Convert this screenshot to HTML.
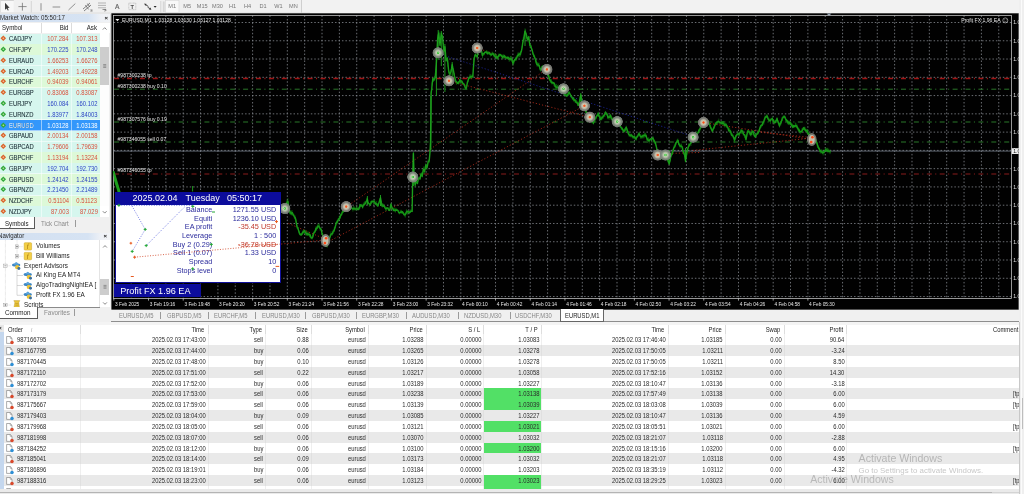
<!DOCTYPE html>
<html lang="en"><head><meta charset="utf-8"><title>MetaTrader 4</title>
<style>
html,body{margin:0;padding:0}
body{-webkit-font-smoothing:antialiased;width:1024px;height:494px;overflow:hidden;background:#f0f0f0;position:relative;font-family:"Liberation Sans",sans-serif;font-size:5.85px;color:#222;line-height:1}
.abs{position:absolute}
.t{position:absolute;white-space:nowrap;line-height:1}
.r{text-align:right}
#mw .row{position:absolute;left:0;width:100px;height:10.8px}
#mw .row span{position:absolute;top:2.6px;font-size:6.5px;white-space:nowrap;transform:scaleX(.9);transform-origin:100% 50%}
#mw .row span.sym{transform-origin:0 50%}
#mw .sym{left:9.4px;color:#22353c;-webkit-text-stroke:.1px #22353c}
#mw .bid{right:31.4px}
#mw .ask{right:2.5px}
.up{color:#2c44c4}.dn{color:#d8503c}
#tbl .row{position:absolute;left:0;width:1024px;height:10.83px}
#tbl .row span{position:absolute;top:3.05px;white-space:nowrap;color:#2a2a2a;font-size:6.5px;transform:scaleX(.9);transform-origin:100% 50%}
#tbl .row span.l{transform-origin:0 50%}
#tbl .hd span{position:absolute;top:2.8px;white-space:nowrap;color:#222;font-size:6.5px;transform:scaleX(.9);transform-origin:100% 50%}
#tbl .hd span.l{transform-origin:0 50%}
.nav span{position:absolute;white-space:nowrap;font-size:6.7px;color:#222;transform:scaleX(.945);transform-origin:0 50%}
.ip{position:absolute;white-space:nowrap;font-size:7.25px;color:#2b2b9c}
</style></head><body><div id="app" style="position:absolute;left:0;top:0;width:1024px;height:494px;will-change:transform;opacity:.999">

<div class="abs" id="toolbar" style="left:0;top:0;width:1024px;height:13.3px;background:#f0f0f0"></div>
<div class="abs" style="left:301px;top:0;width:723px;height:13.3px;background:#f2f2f2"></div>
<div class="abs" style="left:300.5px;top:0;width:.7px;height:13px;background:#cfcfcf"></div>
<svg class="abs" style="left:0;top:0" width="310" height="14" viewBox="0 0 310 14">
<rect x="0.8" y="0.6" width="12.8" height="11.6" fill="#f8f8f8"/><rect x="0" y="0" width="13.8" height=".7" fill="#c4c4c4"/><rect x="0" y="0" width=".7" height="12.4" fill="#dadada"/><rect x="0" y="12.5" width="311" height="1" fill="#dedede"/>
<path d="M5 2.8 L5 9.8 L6.7 8.4 L7.8 10.6 L8.7 10.2 L7.7 8 L9.6 7.8 Z" fill="#3c3c3c"/>
<path d="M22.4 2.8 V10.6 M18.4 6.6 H26.6" stroke="#6e6e6e" stroke-width=".75" fill="none"/>
<path d="M31.3 1 V12.5" stroke="#c8c8c8" stroke-width=".7"/>
<path d="M41 3.2 V10.6" stroke="#777" stroke-width=".8"/>
<path d="M52.6 7 H60.2" stroke="#777" stroke-width=".8"/>
<path d="M68.5 10 L75.3 3.6" stroke="#777" stroke-width=".8"/>
<path d="M83 9 L90 3 M84 11 L91 5 M85.4 5.2 L88.6 9.4 M87.4 3.6 L89.8 7" stroke="#666" stroke-width=".8" fill="none"/>
<path d="M98 3 H106 M98 5.4 H106 M98 7.8 H106" stroke="#999" stroke-width=".7"/>
<path d="M102.5 9.5 H106" stroke="#777" stroke-width=".8"/>
<rect x="128.8" y="3.1" width="7" height="6.6" fill="none" stroke="#9a9a9a" stroke-width=".5" stroke-dasharray=".9 .5"/>
<path d="M145 4.4 L148.4 6.4 M147.6 7.2 L150.6 9" stroke="#3a3a3a" stroke-width=".9" fill="none"/><path d="M144.2 3.6 L146.8 3.9 L145.2 5.8 Z M151.4 9.8 L148.8 9.5 L150.4 7.6 Z" fill="#3a3a3a"/>
<path d="M153.6 6 L156.6 6 L155.1 7.8 Z" fill="#222"/>
<path d="M160.8 1 V12.5" stroke="#c8c8c8" stroke-width=".7"/>
<path d="M163.3 1.5 V12 M164.2 1.5 V12" stroke="#bdbdbd" stroke-width=".5"/>
<rect x="165.6" y="0.3" width="13.4" height="12.4" fill="#f8f8f8" stroke="#cfcfcf" stroke-width=".5"/>
<text x="117.2" y="9.3" font-family="Liberation Sans, sans-serif" font-size="6.6" fill="#606060" text-anchor="middle" stroke="#606060" stroke-width=".15">A</text>
<text x="132.3" y="8.8" font-family="Liberation Sans, sans-serif" font-weight="bold" font-size="5.6" fill="#4a4a4a" text-anchor="middle">T</text>
<text x="90.5" y="12" font-family="Liberation Sans, sans-serif" font-size="3.5" fill="#555">E</text>
<text x="104.5" y="12.4" font-family="Liberation Sans, sans-serif" font-size="3.5" fill="#555">F</text>
</svg>
<div class="t" style="left:162.2px;width:20px;text-align:center;top:4.2px;font-size:5.6px;color:#777">M1</div>
<div class="t" style="left:177.2px;width:20px;text-align:center;top:4.2px;font-size:5.6px;color:#777">M5</div>
<div class="t" style="left:192.2px;width:20px;text-align:center;top:4.2px;font-size:5.6px;color:#777">M15</div>
<div class="t" style="left:207.5px;width:20px;text-align:center;top:4.2px;font-size:5.6px;color:#777">M30</div>
<div class="t" style="left:222.6px;width:20px;text-align:center;top:4.2px;font-size:5.6px;color:#777">H1</div>
<div class="t" style="left:237.6px;width:20px;text-align:center;top:4.2px;font-size:5.6px;color:#777">H4</div>
<div class="t" style="left:253px;width:20px;text-align:center;top:4.2px;font-size:5.6px;color:#777">D1</div>
<div class="t" style="left:268.4px;width:20px;text-align:center;top:4.2px;font-size:5.6px;color:#777">W1</div>
<div class="t" style="left:283.4px;width:20px;text-align:center;top:4.2px;font-size:5.6px;color:#777">MN</div>
<div id="mw" class="abs" style="left:0;top:13.6px;width:110px;height:217px">
<div class="abs" style="left:0;top:.4px;width:110px;height:8.4px;background:linear-gradient(90deg,#d3e0f1 0,#d6e3f3 88px,#eef1f6 101px,#f1f3f6 110px)"></div>
<div class="t" style="left:0.3px;top:1.2px;font-size:6.6px;color:#2a2a2a;transform:scaleX(.93);transform-origin:0 50%">Market Watch: 05:50:17</div>
<div class="t" style="left:104.6px;top:1.4px;font-size:6px;color:#111;font-weight:bold">×</div>
<div class="abs" style="left:0;top:9.2px;width:110px;height:10.6px;background:#fff"></div>
<div class="t" style="left:1.8px;top:11.5px;font-size:6.6px;color:#222;transform:scaleX(.93);transform-origin:0 50%">Symbol</div>
<div class="t r" style="right:41.5px;top:11.5px;font-size:6.6px;color:#222;transform:scaleX(.93);transform-origin:100% 50%">Bid</div>
<div class="t r" style="right:13px;top:11.5px;font-size:6.6px;color:#222;transform:scaleX(.93);transform-origin:100% 50%">Ask</div>
<div class="abs" style="left:41.2px;top:9.6px;width:.6px;height:9.8px;background:#dcdcdc"></div>
<div class="abs" style="left:70.8px;top:9.6px;width:.6px;height:9.8px;background:#dcdcdc"></div>
<div class="row" style="top:20.00px;background:#d6f6ee">
<svg class="abs" style="left:0.2px;top:1.7px" width="7" height="7" viewBox="0 0 7 7"><path d="M3.3 .5 L6.1 3.3 L3.3 6.1 L.5 3.3 Z" fill="#d9632a"/><path d="M3.3 2.3 L4.3 3.3 L3.3 4.3 L2.3 3.3 Z" fill="#fbe6cc" opacity=".7"/></svg>
<span class="sym" style="">CADJPY</span><span class="bid dn" style="">107.284</span><span class="ask dn" style="">107.313</span>
<div class="abs" style="left:0;bottom:0;width:100px;height:.5px;background:rgba(255,255,255,.55)"></div>
<div class="abs" style="left:41.2px;top:0;width:.6px;height:10.8px;background:rgba(255,255,255,.5)"></div>
<div class="abs" style="left:70.8px;top:0;width:.6px;height:10.8px;background:rgba(255,255,255,.5)"></div>
</div>
<div class="row" style="top:30.80px;background:#ddf9d8">
<svg class="abs" style="left:0.2px;top:1.7px" width="7" height="7" viewBox="0 0 7 7"><path d="M3.3 .5 L6.1 3.3 L3.3 6.1 L.5 3.3 Z" fill="#2faa3a"/><path d="M3.3 2.3 L4.3 3.3 L3.3 4.3 L2.3 3.3 Z" fill="#fbe6cc" opacity=".7"/></svg>
<span class="sym" style="">CHFJPY</span><span class="bid up" style="">170.225</span><span class="ask up" style="">170.248</span>
<div class="abs" style="left:0;bottom:0;width:100px;height:.5px;background:rgba(255,255,255,.55)"></div>
<div class="abs" style="left:41.2px;top:0;width:.6px;height:10.8px;background:rgba(255,255,255,.5)"></div>
<div class="abs" style="left:70.8px;top:0;width:.6px;height:10.8px;background:rgba(255,255,255,.5)"></div>
</div>
<div class="row" style="top:41.60px;background:#d6f6ee">
<svg class="abs" style="left:0.2px;top:1.7px" width="7" height="7" viewBox="0 0 7 7"><path d="M3.3 .5 L6.1 3.3 L3.3 6.1 L.5 3.3 Z" fill="#d9632a"/><path d="M3.3 2.3 L4.3 3.3 L3.3 4.3 L2.3 3.3 Z" fill="#fbe6cc" opacity=".7"/></svg>
<span class="sym" style="">EURAUD</span><span class="bid dn" style="">1.66253</span><span class="ask dn" style="">1.66276</span>
<div class="abs" style="left:0;bottom:0;width:100px;height:.5px;background:rgba(255,255,255,.55)"></div>
<div class="abs" style="left:41.2px;top:0;width:.6px;height:10.8px;background:rgba(255,255,255,.5)"></div>
<div class="abs" style="left:70.8px;top:0;width:.6px;height:10.8px;background:rgba(255,255,255,.5)"></div>
</div>
<div class="row" style="top:52.40px;background:#d6f6ee">
<svg class="abs" style="left:0.2px;top:1.7px" width="7" height="7" viewBox="0 0 7 7"><path d="M3.3 .5 L6.1 3.3 L3.3 6.1 L.5 3.3 Z" fill="#d9632a"/><path d="M3.3 2.3 L4.3 3.3 L3.3 4.3 L2.3 3.3 Z" fill="#fbe6cc" opacity=".7"/></svg>
<span class="sym" style="">EURCAD</span><span class="bid dn" style="">1.49203</span><span class="ask dn" style="">1.49228</span>
<div class="abs" style="left:0;bottom:0;width:100px;height:.5px;background:rgba(255,255,255,.55)"></div>
<div class="abs" style="left:41.2px;top:0;width:.6px;height:10.8px;background:rgba(255,255,255,.5)"></div>
<div class="abs" style="left:70.8px;top:0;width:.6px;height:10.8px;background:rgba(255,255,255,.5)"></div>
</div>
<div class="row" style="top:63.20px;background:#ddf9d8">
<svg class="abs" style="left:0.2px;top:1.7px" width="7" height="7" viewBox="0 0 7 7"><path d="M3.3 .5 L6.1 3.3 L3.3 6.1 L.5 3.3 Z" fill="#d9632a"/><path d="M3.3 2.3 L4.3 3.3 L3.3 4.3 L2.3 3.3 Z" fill="#fbe6cc" opacity=".7"/></svg>
<span class="sym" style="">EURCHF</span><span class="bid dn" style="">0.94039</span><span class="ask dn" style="">0.94061</span>
<div class="abs" style="left:0;bottom:0;width:100px;height:.5px;background:rgba(255,255,255,.55)"></div>
<div class="abs" style="left:41.2px;top:0;width:.6px;height:10.8px;background:rgba(255,255,255,.5)"></div>
<div class="abs" style="left:70.8px;top:0;width:.6px;height:10.8px;background:rgba(255,255,255,.5)"></div>
</div>
<div class="row" style="top:74.00px;background:#d6f6ee">
<svg class="abs" style="left:0.2px;top:1.7px" width="7" height="7" viewBox="0 0 7 7"><path d="M3.3 .5 L6.1 3.3 L3.3 6.1 L.5 3.3 Z" fill="#d9632a"/><path d="M3.3 2.3 L4.3 3.3 L3.3 4.3 L2.3 3.3 Z" fill="#fbe6cc" opacity=".7"/></svg>
<span class="sym" style="">EURGBP</span><span class="bid dn" style="">0.83068</span><span class="ask dn" style="">0.83087</span>
<div class="abs" style="left:0;bottom:0;width:100px;height:.5px;background:rgba(255,255,255,.55)"></div>
<div class="abs" style="left:41.2px;top:0;width:.6px;height:10.8px;background:rgba(255,255,255,.5)"></div>
<div class="abs" style="left:70.8px;top:0;width:.6px;height:10.8px;background:rgba(255,255,255,.5)"></div>
</div>
<div class="row" style="top:84.80px;background:#d6f6ee">
<svg class="abs" style="left:0.2px;top:1.7px" width="7" height="7" viewBox="0 0 7 7"><path d="M3.3 .5 L6.1 3.3 L3.3 6.1 L.5 3.3 Z" fill="#2faa3a"/><path d="M3.3 2.3 L4.3 3.3 L3.3 4.3 L2.3 3.3 Z" fill="#fbe6cc" opacity=".7"/></svg>
<span class="sym" style="">EURJPY</span><span class="bid up" style="">160.084</span><span class="ask up" style="">160.102</span>
<div class="abs" style="left:0;bottom:0;width:100px;height:.5px;background:rgba(255,255,255,.55)"></div>
<div class="abs" style="left:41.2px;top:0;width:.6px;height:10.8px;background:rgba(255,255,255,.5)"></div>
<div class="abs" style="left:70.8px;top:0;width:.6px;height:10.8px;background:rgba(255,255,255,.5)"></div>
</div>
<div class="row" style="top:95.60px;background:#d6f6ee">
<svg class="abs" style="left:0.2px;top:1.7px" width="7" height="7" viewBox="0 0 7 7"><path d="M3.3 .5 L6.1 3.3 L3.3 6.1 L.5 3.3 Z" fill="#2faa3a"/><path d="M3.3 2.3 L4.3 3.3 L3.3 4.3 L2.3 3.3 Z" fill="#fbe6cc" opacity=".7"/></svg>
<span class="sym" style="">EURNZD</span><span class="bid up" style="">1.83977</span><span class="ask up" style="">1.84003</span>
<div class="abs" style="left:0;bottom:0;width:100px;height:.5px;background:rgba(255,255,255,.55)"></div>
<div class="abs" style="left:41.2px;top:0;width:.6px;height:10.8px;background:rgba(255,255,255,.5)"></div>
<div class="abs" style="left:70.8px;top:0;width:.6px;height:10.8px;background:rgba(255,255,255,.5)"></div>
</div>
<div class="row" style="top:106.40px;background:#3397fb">
<svg class="abs" style="left:0.2px;top:1.7px" width="7" height="7" viewBox="0 0 7 7"><path d="M3.3 .5 L6.1 3.3 L3.3 6.1 L.5 3.3 Z" fill="#2faa3a"/><path d="M3.3 2.3 L4.3 3.3 L3.3 4.3 L2.3 3.3 Z" fill="#fbe6cc" opacity=".7"/></svg>
<span class="sym" style="color:#fff">EURUSD</span><span class="bid " style="color:#fff">1.03128</span><span class="ask " style="color:#fff">1.03138</span>
<div class="abs" style="left:0;bottom:0;width:100px;height:.5px;background:rgba(255,255,255,.55)"></div>
<div class="abs" style="left:41.2px;top:0;width:.6px;height:10.8px;background:rgba(255,255,255,.5)"></div>
<div class="abs" style="left:70.8px;top:0;width:.6px;height:10.8px;background:rgba(255,255,255,.5)"></div>
</div>
<div class="row" style="top:117.20px;background:#d6f6ee">
<svg class="abs" style="left:0.2px;top:1.7px" width="7" height="7" viewBox="0 0 7 7"><path d="M3.3 .5 L6.1 3.3 L3.3 6.1 L.5 3.3 Z" fill="#d9632a"/><path d="M3.3 2.3 L4.3 3.3 L3.3 4.3 L2.3 3.3 Z" fill="#fbe6cc" opacity=".7"/></svg>
<span class="sym" style="">GBPAUD</span><span class="bid dn" style="">2.00134</span><span class="ask dn" style="">2.00158</span>
<div class="abs" style="left:0;bottom:0;width:100px;height:.5px;background:rgba(255,255,255,.55)"></div>
<div class="abs" style="left:41.2px;top:0;width:.6px;height:10.8px;background:rgba(255,255,255,.5)"></div>
<div class="abs" style="left:70.8px;top:0;width:.6px;height:10.8px;background:rgba(255,255,255,.5)"></div>
</div>
<div class="row" style="top:128.00px;background:#d6f6ee">
<svg class="abs" style="left:0.2px;top:1.7px" width="7" height="7" viewBox="0 0 7 7"><path d="M3.3 .5 L6.1 3.3 L3.3 6.1 L.5 3.3 Z" fill="#d9632a"/><path d="M3.3 2.3 L4.3 3.3 L3.3 4.3 L2.3 3.3 Z" fill="#fbe6cc" opacity=".7"/></svg>
<span class="sym" style="">GBPCAD</span><span class="bid dn" style="">1.79606</span><span class="ask dn" style="">1.79639</span>
<div class="abs" style="left:0;bottom:0;width:100px;height:.5px;background:rgba(255,255,255,.55)"></div>
<div class="abs" style="left:41.2px;top:0;width:.6px;height:10.8px;background:rgba(255,255,255,.5)"></div>
<div class="abs" style="left:70.8px;top:0;width:.6px;height:10.8px;background:rgba(255,255,255,.5)"></div>
</div>
<div class="row" style="top:138.80px;background:#ddf9d8">
<svg class="abs" style="left:0.2px;top:1.7px" width="7" height="7" viewBox="0 0 7 7"><path d="M3.3 .5 L6.1 3.3 L3.3 6.1 L.5 3.3 Z" fill="#d9632a"/><path d="M3.3 2.3 L4.3 3.3 L3.3 4.3 L2.3 3.3 Z" fill="#fbe6cc" opacity=".7"/></svg>
<span class="sym" style="">GBPCHF</span><span class="bid dn" style="">1.13194</span><span class="ask dn" style="">1.13224</span>
<div class="abs" style="left:0;bottom:0;width:100px;height:.5px;background:rgba(255,255,255,.55)"></div>
<div class="abs" style="left:41.2px;top:0;width:.6px;height:10.8px;background:rgba(255,255,255,.5)"></div>
<div class="abs" style="left:70.8px;top:0;width:.6px;height:10.8px;background:rgba(255,255,255,.5)"></div>
</div>
<div class="row" style="top:149.60px;background:#d6f6ee">
<svg class="abs" style="left:0.2px;top:1.7px" width="7" height="7" viewBox="0 0 7 7"><path d="M3.3 .5 L6.1 3.3 L3.3 6.1 L.5 3.3 Z" fill="#2faa3a"/><path d="M3.3 2.3 L4.3 3.3 L3.3 4.3 L2.3 3.3 Z" fill="#fbe6cc" opacity=".7"/></svg>
<span class="sym" style="">GBPJPY</span><span class="bid up" style="">192.704</span><span class="ask up" style="">192.730</span>
<div class="abs" style="left:0;bottom:0;width:100px;height:.5px;background:rgba(255,255,255,.55)"></div>
<div class="abs" style="left:41.2px;top:0;width:.6px;height:10.8px;background:rgba(255,255,255,.5)"></div>
<div class="abs" style="left:70.8px;top:0;width:.6px;height:10.8px;background:rgba(255,255,255,.5)"></div>
</div>
<div class="row" style="top:160.40px;background:#ddf9d8">
<svg class="abs" style="left:0.2px;top:1.7px" width="7" height="7" viewBox="0 0 7 7"><path d="M3.3 .5 L6.1 3.3 L3.3 6.1 L.5 3.3 Z" fill="#2faa3a"/><path d="M3.3 2.3 L4.3 3.3 L3.3 4.3 L2.3 3.3 Z" fill="#fbe6cc" opacity=".7"/></svg>
<span class="sym" style="">GBPUSD</span><span class="bid up" style="">1.24142</span><span class="ask up" style="">1.24155</span>
<div class="abs" style="left:0;bottom:0;width:100px;height:.5px;background:rgba(255,255,255,.55)"></div>
<div class="abs" style="left:41.2px;top:0;width:.6px;height:10.8px;background:rgba(255,255,255,.5)"></div>
<div class="abs" style="left:70.8px;top:0;width:.6px;height:10.8px;background:rgba(255,255,255,.5)"></div>
</div>
<div class="row" style="top:171.20px;background:#d6f6ee">
<svg class="abs" style="left:0.2px;top:1.7px" width="7" height="7" viewBox="0 0 7 7"><path d="M3.3 .5 L6.1 3.3 L3.3 6.1 L.5 3.3 Z" fill="#2faa3a"/><path d="M3.3 2.3 L4.3 3.3 L3.3 4.3 L2.3 3.3 Z" fill="#fbe6cc" opacity=".7"/></svg>
<span class="sym" style="">GBPNZD</span><span class="bid up" style="">2.21450</span><span class="ask up" style="">2.21489</span>
<div class="abs" style="left:0;bottom:0;width:100px;height:.5px;background:rgba(255,255,255,.55)"></div>
<div class="abs" style="left:41.2px;top:0;width:.6px;height:10.8px;background:rgba(255,255,255,.5)"></div>
<div class="abs" style="left:70.8px;top:0;width:.6px;height:10.8px;background:rgba(255,255,255,.5)"></div>
</div>
<div class="row" style="top:182.00px;background:#ddf9d8">
<svg class="abs" style="left:0.2px;top:1.7px" width="7" height="7" viewBox="0 0 7 7"><path d="M3.3 .5 L6.1 3.3 L3.3 6.1 L.5 3.3 Z" fill="#d9632a"/><path d="M3.3 2.3 L4.3 3.3 L3.3 4.3 L2.3 3.3 Z" fill="#fbe6cc" opacity=".7"/></svg>
<span class="sym" style="">NZDCHF</span><span class="bid dn" style="">0.51104</span><span class="ask dn" style="">0.51123</span>
<div class="abs" style="left:0;bottom:0;width:100px;height:.5px;background:rgba(255,255,255,.55)"></div>
<div class="abs" style="left:41.2px;top:0;width:.6px;height:10.8px;background:rgba(255,255,255,.5)"></div>
<div class="abs" style="left:70.8px;top:0;width:.6px;height:10.8px;background:rgba(255,255,255,.5)"></div>
</div>
<div class="row" style="top:192.80px;background:#d6f6ee">
<svg class="abs" style="left:0.2px;top:1.7px" width="7" height="7" viewBox="0 0 7 7"><path d="M3.3 .5 L6.1 3.3 L3.3 6.1 L.5 3.3 Z" fill="#d9632a"/><path d="M3.3 2.3 L4.3 3.3 L3.3 4.3 L2.3 3.3 Z" fill="#fbe6cc" opacity=".7"/></svg>
<span class="sym" style="">NZDJPY</span><span class="bid dn" style="">87.003</span><span class="ask dn" style="">87.029</span>
<div class="abs" style="left:0;bottom:0;width:100px;height:.5px;background:rgba(255,255,255,.55)"></div>
<div class="abs" style="left:41.2px;top:0;width:.6px;height:10.8px;background:rgba(255,255,255,.5)"></div>
<div class="abs" style="left:70.8px;top:0;width:.6px;height:10.8px;background:rgba(255,255,255,.5)"></div>
</div>
<div class="abs" style="left:100px;top:9.2px;width:9.3px;height:194.5px;background:#fff"></div>
<div class="abs" style="left:100px;top:33.7px;width:9.3px;height:37.8px;background:#cdcdcd"></div>
<div class="abs" style="left:100.3px;top:71.5px;width:9px;height:121px;background:#fdfdfd"></div>
<svg class="abs" style="left:100px;top:9.2px" width="10" height="196" viewBox="0 0 10 196">
<path d="M2.8 6.6 L4.7 4.7 L6.6 6.6" stroke="#555" stroke-width=".7" fill="none"/>
<path d="M2.8 188.2 L4.7 190.1 L6.6 188.2" stroke="#555" stroke-width=".7" fill="none"/>
<path d="M3.2 41.6 H6.2 M3.2 43 H6.2 M3.2 44.4 H6.2" stroke="#666" stroke-width=".6"/>
</svg>
<div class="abs" style="left:109.5px;top:0;width:.6px;height:217px;background:#d6d6d6"></div>
<div class="abs" style="left:0;top:203.6px;width:110px;height:13px;background:#f0f0f0"></div>
<div class="abs" style="left:-1px;top:203px;width:35.6px;height:12.1px;background:#fff;border:.9px solid #5a5a5a;border-top:none;box-sizing:border-box"></div>
<div class="t" style="left:4.6px;top:207.1px;font-size:6.6px;color:#222;transform:scaleX(.93);transform-origin:0 50%">Symbols</div>
<div class="t" style="left:40.8px;top:207.1px;font-size:6.6px;color:#8a8a8a;transform:scaleX(.93);transform-origin:0 50%">Tick Chart</div>
<div class="abs" style="left:75px;top:206.6px;width:.6px;height:7px;background:#9a9a9a"></div>
</div>
<div id="nav" class="abs nav" style="left:0;top:232.8px;width:110px;height:88px">
<div class="abs" style="left:0;top:0;width:110px;height:7.4px;background:linear-gradient(90deg,#d3e0f1 0,#d6e3f3 88px,#eef1f6 101px,#f1f3f6 110px)"></div>
<div class="t" style="left:-1.8px;top:0.5px;font-size:6.6px;color:#2a2a2a;transform:scaleX(.93);transform-origin:0 50%">Navigator</div>
<div class="t" style="left:103.6px;top:0.4px;font-size:6px;color:#111;font-weight:bold">×</div>
<div class="abs" style="left:0;top:7.4px;width:109.5px;height:67.3px;background:#fff"></div>
<div class="abs" style="left:99.3px;top:7.4px;width:.5px;height:67.3px;background:#e4e4e4"></div>
<div class="abs" style="left:100.2px;top:46.6px;width:8.8px;height:15.6px;background:#cdcdcd"></div>
<svg class="abs" style="left:99.6px;top:7.4px" width="10" height="68" viewBox="0 0 10 68">
<path d="M3.1 7.5 L5 5.6 L6.9 7.5" stroke="#555" stroke-width=".7" fill="none"/>
<path d="M3.1 59.4 L5 61.3 L6.9 59.4" stroke="#555" stroke-width=".7" fill="none" transform="translate(0,3)"/>
<path d="M3.5 45.4 H6.5 M3.5 46.8 H6.5 M3.5 48.2 H6.5" stroke="#666" stroke-width=".6"/>
</svg>
<svg class="abs" style="left:0;top:0" width="100" height="75" viewBox="0 0 100 75"><path d="M17 7.4 V23.30000000000001 M17 13.599999999999994 H23 M17 23.30000000000001 H23" stroke="#b8b8b8" stroke-width=".5" fill="none" stroke-dasharray=".6 .6"/><path d="M5.4 7.4 V74.6 M5.4 32.80000000000001 H11.5 M5.4 72.0 H11.5" stroke="#b8b8b8" stroke-width=".5" fill="none" stroke-dasharray=".6 .6"/><path d="M17 36.80000000000001 V62.30000000000001 M17 42.5 H23 M17 52.5 H23 M17 62.30000000000001 H23" stroke="#b0b0b0" stroke-width=".5" fill="none"/><rect x="15.3" y="11.899999999999995" width="3.4" height="3.4" fill="#fff" stroke="#9a9a9a" stroke-width=".45"/><path d="M16 13.599999999999994 H18" stroke="#444" stroke-width=".5"/><path d="M17 12.599999999999994 V14.599999999999994" stroke="#444" stroke-width=".5"/><rect x="15.3" y="21.600000000000012" width="3.4" height="3.4" fill="#fff" stroke="#9a9a9a" stroke-width=".45"/><path d="M16 23.30000000000001 H18" stroke="#444" stroke-width=".5"/><path d="M17 22.30000000000001 V24.30000000000001" stroke="#444" stroke-width=".5"/><rect x="3.7" y="31.100000000000012" width="3.4" height="3.4" fill="#fff" stroke="#9a9a9a" stroke-width=".45"/><path d="M4.4 32.80000000000001 H6.4" stroke="#444" stroke-width=".5"/><rect x="3.7" y="70.3" width="3.4" height="3.4" fill="#fff" stroke="#9a9a9a" stroke-width=".45"/><path d="M4.4 72.0 H6.4" stroke="#444" stroke-width=".5"/><path d="M5.4 71.0 V73.0" stroke="#444" stroke-width=".5"/><g transform="translate(24.2,9.699999999999994)"><rect x="0" y="0" width="7.4" height="7.4" rx=".8" fill="#f3cf45" stroke="#caa21e" stroke-width=".5"/><text x="3.7" y="5.8" font-family="Liberation Serif, serif" font-style="italic" font-size="5.6" fill="#8a5a00" text-anchor="middle">f</text></g><g transform="translate(24.2,19.400000000000013)"><rect x="0" y="0" width="7.4" height="7.4" rx=".8" fill="#f3cf45" stroke="#caa21e" stroke-width=".5"/><text x="3.7" y="5.8" font-family="Liberation Serif, serif" font-style="italic" font-size="5.6" fill="#8a5a00" text-anchor="middle">f</text></g><g transform="translate(12.0,28.20000000000001) scale(1.15)"><ellipse cx="3.6" cy="3.2" rx="3.6" ry="1.5" fill="#3a86c4"/><path d="M1.6 3 Q3.6 -1.6 5.8 3 Z" fill="#5aa2da"/><circle cx="4.6" cy="5.2" r="1.9" fill="#e8c23a"/><circle cx="6" cy="6.3" r="1.3" fill="#3d6f9e"/></g><g transform="translate(23.599999999999998,37.9) scale(1.15)"><ellipse cx="3.6" cy="3.2" rx="3.6" ry="1.5" fill="#3a86c4"/><path d="M1.6 3 Q3.6 -1.6 5.8 3 Z" fill="#5aa2da"/><circle cx="4.6" cy="5.2" r="1.9" fill="#e8c23a"/><circle cx="6" cy="6.3" r="1.3" fill="#3d6f9e"/></g><g transform="translate(23.599999999999998,47.9) scale(1.15)"><ellipse cx="3.6" cy="3.2" rx="3.6" ry="1.5" fill="#3a86c4"/><path d="M1.6 3 Q3.6 -1.6 5.8 3 Z" fill="#5aa2da"/><circle cx="4.6" cy="5.2" r="1.9" fill="#e8c23a"/><circle cx="6" cy="6.3" r="1.3" fill="#3d6f9e"/></g><g transform="translate(23.599999999999998,57.70000000000001) scale(1.15)"><ellipse cx="3.6" cy="3.2" rx="3.6" ry="1.5" fill="#3a86c4"/><path d="M1.6 3 Q3.6 -1.6 5.8 3 Z" fill="#5aa2da"/><circle cx="4.6" cy="5.2" r="1.9" fill="#e8c23a"/><circle cx="6" cy="6.3" r="1.3" fill="#3d6f9e"/></g><g transform="translate(12.8,67.6)"><path d="M1 0 H7 L6 2 L6.6 6.6 H1.2 L2 2 Z" fill="#e9c53b" stroke="#b8922a" stroke-width=".4"/><path d="M2.6 3 H5.6 M2.6 4.6 H5.6" stroke="#a07a1a" stroke-width=".4"/></g></svg>
<span style="left:36px;top:10.70px">Volumes</span>
<span style="left:36px;top:20.40px">Bill Williams</span>
<span style="left:24.3px;top:29.90px">Expert Advisors</span>
<span style="left:36px;top:39.60px">Ai King EA MT4</span>
<span style="left:36px;top:49.60px">AlgoTradingNightEA [</span>
<span style="left:36px;top:59.40px">Profit FX 1.96 EA</span>
<span style="left:24.3px;top:69.10px">Scripts</span>
<div class="abs" style="left:0;top:74.7px;width:110px;height:13.5px;background:#f0f0f0"></div>
<div class="abs" style="left:0;top:74.6px;width:99.5px;height:.6px;background:#8a8a8a"></div>
<div class="abs" style="left:-1px;top:74px;width:38.9px;height:12.3px;background:#fff;border:.9px solid #5a5a5a;border-top:none;box-sizing:border-box"></div>
<span style="left:4.8px;top:77.3px;color:#222">Common</span>
<span style="left:43.6px;top:77.3px;color:#8a8a8a">Favorites</span>
<div class="abs" style="left:74.2px;top:76.6px;width:.6px;height:7px;background:#9a9a9a"></div>
</div>
<svg class="abs" id="chart" style="left:0;top:0" width="1024" height="494" viewBox="0 0 1024 494" font-family="Liberation Sans, sans-serif">
<defs><radialGradient id="mr"><stop offset="0" stop-color="#ff4a18"/><stop offset=".15" stop-color="#f06a38"/><stop offset=".27" stop-color="#d4c8ae"/><stop offset=".48" stop-color="#b8b5a4"/><stop offset=".64" stop-color="#8c8c84" stop-opacity=".96"/><stop offset=".9" stop-color="#7c7c76" stop-opacity=".9"/><stop offset="1" stop-color="#707070" stop-opacity="0"/></radialGradient><radialGradient id="mg"><stop offset="0" stop-color="#c8f0c0"/><stop offset=".14" stop-color="#3cc43c"/><stop offset=".27" stop-color="#c0d4b2"/><stop offset=".48" stop-color="#aab49e"/><stop offset=".64" stop-color="#889084" stop-opacity=".96"/><stop offset=".9" stop-color="#788078" stop-opacity=".9"/><stop offset="1" stop-color="#707070" stop-opacity="0"/></radialGradient><clipPath id="plotclip"><rect x="113.6" y="15.5" width="897.9" height="282.9"/></clipPath></defs>
<rect x="111.19999999999999" y="13.1" width="907.9999999999999" height="296.6" fill="#8a8a8a"/>
<rect x="111.6" y="13.5" width="907.1999999999999" height="296.0" fill="#000"/>
<path d="M131.15 15.5 V298.4 M148.50 15.5 V298.4 M165.86 15.5 V298.4 M183.21 15.5 V298.4 M200.56 15.5 V298.4 M217.91 15.5 V298.4 M235.26 15.5 V298.4 M252.62 15.5 V298.4 M269.97 15.5 V298.4 M287.32 15.5 V298.4 M304.67 15.5 V298.4 M322.02 15.5 V298.4 M339.38 15.5 V298.4 M356.73 15.5 V298.4 M374.08 15.5 V298.4 M391.43 15.5 V298.4 M408.78 15.5 V298.4 M426.14 15.5 V298.4 M443.49 15.5 V298.4 M460.84 15.5 V298.4 M478.19 15.5 V298.4 M495.54 15.5 V298.4 M512.90 15.5 V298.4 M530.25 15.5 V298.4 M547.60 15.5 V298.4 M564.95 15.5 V298.4 M582.30 15.5 V298.4 M599.66 15.5 V298.4 M617.01 15.5 V298.4 M634.36 15.5 V298.4 M651.71 15.5 V298.4 M669.06 15.5 V298.4 M686.42 15.5 V298.4 M703.77 15.5 V298.4 M721.12 15.5 V298.4 M738.47 15.5 V298.4 M755.82 15.5 V298.4 M773.18 15.5 V298.4 M790.53 15.5 V298.4 M807.88 15.5 V298.4 M825.23 15.5 V298.4 M842.58 15.5 V298.4 M859.94 15.5 V298.4 M877.29 15.5 V298.4 M894.64 15.5 V298.4 M911.99 15.5 V298.4 M929.34 15.5 V298.4 M946.70 15.5 V298.4 M964.05 15.5 V298.4 M981.40 15.5 V298.4 M998.75 15.5 V298.4 " stroke="#868a90" stroke-width=".8" stroke-dasharray="1.5 1.96" fill="none"/>
<path d="M113.6 22.50 H1011.5 M113.6 40.77 H1011.5 M113.6 59.04 H1011.5 M113.6 77.31 H1011.5 M113.6 95.58 H1011.5 M113.6 113.85 H1011.5 M113.6 132.12 H1011.5 M113.6 150.39 H1011.5 M113.6 168.66 H1011.5 M113.6 186.93 H1011.5 M113.6 205.20 H1011.5 M113.6 223.47 H1011.5 M113.6 241.74 H1011.5 M113.6 260.01 H1011.5 M113.6 278.28 H1011.5 M113.6 296.55 H1011.5 " stroke="#868a90" stroke-width=".8" stroke-dasharray="1.5 1.96" fill="none"/>
<rect x="113.6" y="15.5" width="897.9" height="282.9" fill="none" stroke="#d8d8d8" stroke-width=".7"/>
<path d="M114.1 78.5 H1009.5" stroke="#a01414" stroke-width="1.7" stroke-dasharray="5 3.4 1.1 3.4" fill="none"/>
<path d="M114.1 89.2 H1009.5" stroke="#2a782a" stroke-width="1.0" stroke-dasharray="5 3.4 1.1 3.4" fill="none"/>
<path d="M114.1 122.0 H1009.5" stroke="#2a782a" stroke-width="1.0" stroke-dasharray="5 3.4 1.1 3.4" fill="none"/>
<path d="M114.1 142.0 H1009.5" stroke="#2a782a" stroke-width="1.0" stroke-dasharray="5 3.4 1.1 3.4" fill="none"/>
<path d="M114.1 174.0 H1009.5" stroke="#8a1c1c" stroke-width="1.0" stroke-dasharray="5 3.4 1.1 3.4" fill="none"/>
<path d="M113.6 151.1 H1011.5" stroke="#7e8696" stroke-width=".7" fill="none"/>
<path d="M346 207 L547 69" stroke="#a82a1a" stroke-width=".9" stroke-dasharray="1.2 2" fill="none"/>
<path d="M326 243 L584 106" stroke="#a82a1a" stroke-width=".9" stroke-dasharray="1.2 2" fill="none"/>
<path d="M134.5 257.2 L326 240" stroke="#a82a1a" stroke-width=".9" stroke-dasharray="1.2 2" fill="none"/>
<path d="M439 53.8 L693 136.5" stroke="#1c2494" stroke-width=".9" stroke-dasharray="1.2 2" fill="none"/>
<path d="M449 81 L589.8 117.2" stroke="#a82a1a" stroke-width=".9" stroke-dasharray="1.2 2" fill="none"/>
<path d="M477 48 L512 60" stroke="#a82a1a" stroke-width=".9" stroke-dasharray="1.2 2" fill="none"/>
<path d="M703.5 122.5 L811.8 139.5" stroke="#a82a1a" stroke-width=".9" stroke-dasharray="1.2 2" fill="none"/>
<path d="M693 150.4 L812 138" stroke="#a82a1a" stroke-width=".9" stroke-dasharray="1.2 2" fill="none"/>
<path d="M757.7 132 L811 137.5" stroke="#a82a1a" stroke-width=".9" stroke-dasharray="1.2 2" fill="none"/>
<path d="M288.4 223.4 L322.6 238" stroke="#a82a1a" stroke-width=".9" stroke-dasharray="1.2 2" fill="none"/>
<path d="M666 153.5 L700 152.5" stroke="#a82a1a" stroke-width=".9" stroke-dasharray="1.2 2" fill="none"/>
<path d="M113.6 171.9 L114.3 175.1 L115.0 178.8 L115.8 181.4 L116.5 184.2 L117.2 186.3 L118.0 187.6 L118.7 189.5 L119.3 191.5 L120.0 193.6" stroke="#1c9e1c" stroke-width="1.4" fill="none" stroke-linejoin="round" stroke-linecap="round"/>
<path d="M113.6 170.8V172.3M114.3 174.9V176.4M115.0 176.0V179.7M115.8 179.9V184.7M116.5 182.7V186.2M117.2 184.4V186.2M118.0 185.2V188.3M118.7 188.0V189.9M119.3 190.7V192.0M120.0 192.9V195.7" stroke="#149414" stroke-width=".6" fill="none" opacity=".9"/>
<path d="M280.5 209.0 L281.1 208.8 L281.7 208.1 L282.2 207.9 L282.8 207.1 L283.4 206.2 L284.0 206.7 L284.6 206.8 L285.1 206.3 L285.7 205.6 L286.2 204.2 L286.8 203.1 L287.3 202.3 L287.9 201.3 L288.5 205.3 L289.1 208.3 L289.7 212.1 L290.3 212.0 L290.9 213.2 L291.4 213.7 L292.0 212.7 L292.6 213.1 L293.2 214.9 L293.8 215.4 L294.4 217.0 L295.0 217.1 L295.7 219.3 L296.3 222.8 L297.0 226.5 L297.7 228.0 L298.3 229.6 L299.0 231.8 L299.6 233.7 L300.3 234.6 L301.0 234.3 L301.6 234.7 L302.2 233.2 L302.9 231.9 L303.6 232.1 L304.2 230.6 L304.8 231.7 L305.4 232.4 L305.9 232.6 L306.5 234.0 L307.1 233.6 L307.7 234.4 L308.3 234.0 L308.9 234.5 L309.5 234.5 L310.1 235.1 L310.8 237.0 L311.4 238.1 L312.0 238.1 L312.7 237.1 L313.3 234.5 L314.0 232.7 L314.7 232.1 L315.3 230.7 L316.0 228.3 L316.7 228.7 L317.4 227.2 L318.0 226.2 L318.7 226.2 L319.4 227.1 L320.0 228.2 L320.6 228.9 L321.3 230.0 L322.0 233.0 L322.6 235.1 L323.3 238.0 L324.0 240.1 L324.6 241.5 L325.3 243.8 L326.0 244.8 L326.6 246.1 L327.2 244.7 L327.9 241.8 L328.6 239.3 L329.2 238.4 L329.8 237.8 L330.4 236.0 L331.0 234.4 L331.7 233.9 L332.5 233.4 L333.2 231.2 L333.8 230.7 L334.3 229.8 L334.9 228.1 L335.4 226.3 L336.0 224.1 L336.5 222.2 L337.1 222.2 L337.7 220.7 L338.2 220.3 L338.8 218.9 L339.3 218.7 L339.9 217.7 L340.4 216.3 L341.0 214.8 L341.6 214.6 L342.1 212.9 L342.7 211.8 L343.3 211.4 L343.9 211.3 L344.4 210.4 L345.0 208.8 L345.6 209.3 L346.1 208.1 L346.7 206.9 L347.3 206.5 L347.9 206.5 L348.4 205.6 L349.0 205.1 L349.6 206.0 L350.2 207.0 L350.9 207.1 L351.5 207.8 L352.2 208.6 L352.9 209.1 L353.5 208.7 L354.2 208.4 L354.8 209.0 L355.4 208.9 L356.0 209.0 L356.7 208.2 L357.5 209.3 L358.2 209.3 L358.9 209.0 L359.5 206.7 L360.1 206.1 L360.8 205.0 L361.4 205.9 L362.0 205.9 L362.6 207.3 L363.3 205.3 L364.0 204.6 L364.7 204.1 L365.4 203.3 L366.0 202.0 L366.7 200.6 L367.4 199.4 L368.0 202.0 L368.6 203.5 L369.3 203.9 L370.0 204.7 L370.7 203.9 L371.3 202.1 L372.0 201.3 L372.7 201.8 L373.3 201.6 L374.0 201.6 L374.7 202.1 L375.3 203.2 L376.0 204.3 L376.6 203.8 L377.3 204.6 L377.9 205.9 L378.5 204.2 L379.2 202.0 L379.9 199.4 L380.5 197.6 L381.1 201.5 L381.8 205.2 L382.4 206.0 L383.0 205.3 L383.6 206.2 L384.3 206.3 L385.1 207.8 L385.8 208.9 L386.4 208.1 L387.0 208.4 L387.6 208.0 L388.3 209.0 L389.0 210.4 L389.7 210.3 L390.4 206.8 L391.0 204.2 L391.7 206.9 L392.4 208.4 L393.0 208.7 L393.7 210.5 L394.3 210.5 L394.9 210.1 L395.4 210.5 L396.0 209.7 L396.6 210.4 L397.2 210.1 L397.8 210.5 L398.4 211.6 L399.0 212.6 L399.6 212.9 L400.3 212.3 L401.0 212.3 L401.6 211.9 L402.2 211.8 L402.9 212.7 L403.6 214.0 L404.2 215.0 L404.8 214.6 L405.3 214.6 L405.9 213.2 L406.4 212.0 L407.0 211.7 L407.6 211.6 L408.2 211.6 L408.9 212.1 L409.5 212.8 L410.1 212.2 L410.8 211.2 L411.5 211.4 L412.1 211.4 L412.6 183.1 L413.4 153.2 L414.2 180.2 L415.2 185.1 L416.0 180.2 L416.7 182.2 L417.4 183.6 L418.0 180.5 L418.6 178.4 L419.3 178.3 L420.0 179.0 L421.0 173.9 L421.6 174.3 L422.2 176.4 L422.8 172.7 L423.4 169.1 L424.0 169.7 L424.6 171.5 L425.2 168.1 L425.8 165.0 L426.4 166.3 L427.0 167.7 L427.6 165.0 L428.2 161.5 L429.2 161.0 L430.0 152.0 L430.5 142.4 L430.9 118.8 L431.1 93.3 L431.7 89.2 L432.2 83.8 L432.8 78.8 L433.4 79.1 L434.0 80.0 L434.6 78.5 L435.2 77.2 L435.8 70.3 L436.4 62.6 L437.0 51.0 L437.6 39.4 L438.2 35.1 L438.8 32.9 L439.4 39.6 L440.0 45.3 L440.6 39.2 L441.3 33.5 L441.9 35.4 L442.5 36.0 L443.1 43.3 L443.7 51.2 L444.3 48.9 L444.9 46.8 L445.5 53.4 L446.1 60.6 L446.8 58.8 L447.4 58.3 L448.0 64.6 L448.6 70.5 L449.2 73.0 L449.8 74.6 L450.4 73.0 L451.0 71.2 L451.6 68.4 L452.2 64.7 L452.8 67.7 L453.3 69.7 L453.9 73.2 L454.5 76.7 L455.2 79.1 L455.8 81.4 L456.4 81.9 L457.1 82.5 L457.7 83.3 L458.3 83.4 L458.9 81.6 L459.4 81.6 L460.0 79.8 L460.6 81.2 L461.3 81.0 L461.9 81.4 L462.5 83.1 L463.1 83.3 L463.7 83.8 L464.3 85.1 L464.9 86.5 L465.4 87.9 L466.0 88.7 L466.7 86.4 L467.3 83.0 L468.0 80.7 L468.6 78.8 L469.2 77.7 L469.8 77.4 L470.4 76.5 L471.0 76.9 L471.6 76.8 L472.2 76.5 L472.8 76.7 L473.4 68.5 L474.0 59.9 L474.6 56.8 L475.3 54.5 L475.9 55.8 L476.6 55.7 L477.2 57.1 L478.2 49.2 L479.0 50.2 L479.8 51.5 L480.6 50.4 L481.3 50.3 L481.9 52.8 L482.5 55.5 L483.1 53.6 L483.8 53.9 L484.4 52.8 L485.0 52.2 L485.6 52.4 L486.2 52.0 L486.8 52.4 L487.4 53.3 L488.0 53.0 L488.6 53.0 L489.2 52.8 L489.8 53.5 L490.4 54.6 L491.0 54.3 L491.6 54.9 L492.2 53.9 L492.9 53.8 L493.5 54.3 L494.1 55.7 L494.7 56.1 L495.3 56.4 L495.9 56.3 L496.5 57.2 L497.1 58.4 L497.7 56.8 L498.4 56.8 L499.0 55.1 L499.6 54.7 L500.2 54.5 L500.8 55.1 L501.4 55.6 L502.0 56.2 L502.6 57.3 L503.2 56.4 L503.8 56.8 L504.4 55.8 L505.0 56.8 L505.6 57.3 L506.2 57.7 L506.8 57.9 L507.4 57.6 L508.0 57.3 L508.6 58.0 L509.2 58.9 L509.8 59.1 L510.4 58.6 L511.1 59.0 L511.7 59.1 L512.3 60.9 L512.9 63.3 L513.5 61.9 L514.1 61.0 L514.7 59.5 L515.3 59.5 L515.9 58.8 L516.6 58.2 L517.2 56.3 L517.8 55.2 L518.4 55.3 L519.0 53.9 L519.6 54.5 L520.2 54.5 L520.8 52.5 L521.4 51.1 L522.0 48.1 L522.6 43.9 L523.2 40.4 L523.8 38.4 L524.4 34.6 L525.0 31.5 L525.6 32.4 L526.2 34.2 L526.9 37.8 L527.5 39.9 L528.1 37.9 L528.7 36.8 L529.3 41.3 L529.9 45.5 L530.5 45.6 L531.1 47.0 L531.7 49.2 L532.3 50.7 L532.9 53.2 L533.5 54.7 L534.1 56.1 L534.7 57.8 L535.4 59.2 L536.0 61.8 L536.6 63.4 L537.2 64.9 L537.8 64.8 L538.4 65.0 L539.0 65.3 L539.6 67.2 L540.2 68.8 L540.8 69.9 L541.6 67.8 L542.4 66.2 L543.2 71.4 L543.8 71.0 L544.5 71.3 L545.1 70.6 L545.7 70.4 L546.3 71.2 L546.9 71.9 L547.7 74.5 L548.5 75.9 L549.1 77.9 L549.6 79.8 L550.2 80.2 L550.8 81.0 L551.4 82.3 L552.0 82.8 L552.6 82.7 L553.3 82.7 L553.9 83.5 L554.5 83.7 L555.2 85.7 L555.8 87.0 L556.4 87.1 L557.0 87.5 L557.6 87.3 L558.2 87.5 L558.8 88.4 L559.4 89.0 L560.0 90.3 L560.6 91.0 L561.2 90.7 L561.8 91.2 L562.4 91.1 L563.0 91.0 L563.6 92.2 L564.2 92.7 L564.8 94.4 L565.4 95.1 L566.1 95.5 L566.7 96.0 L567.3 95.4 L567.9 94.2 L568.4 93.7 L569.0 92.1 L569.6 93.3 L570.3 94.8 L570.9 95.4 L571.5 96.4 L572.2 97.7 L572.8 98.7 L573.4 98.5 L574.0 99.9 L574.6 100.3 L575.2 100.6 L575.8 101.7 L576.4 102.5 L577.0 103.0 L577.6 103.3 L578.2 104.9 L578.8 105.3 L579.5 101.7 L580.1 98.2 L580.8 95.1 L581.4 97.6 L581.9 101.9 L582.5 106.3 L583.1 106.9 L583.8 108.0 L584.4 108.5 L585.0 109.6 L585.6 111.1 L586.1 111.9 L586.7 113.2 L587.3 115.6 L587.9 116.0 L588.4 116.3 L589.0 117.5 L589.7 118.1 L590.3 119.6 L591.0 120.1 L591.6 121.2 L592.2 120.8 L592.8 122.0 L593.4 123.3 L594.0 121.1 L594.6 120.9 L595.2 118.9 L595.8 117.8 L596.4 116.3 L597.0 115.7 L597.7 115.2 L598.3 113.5 L598.9 115.9 L599.5 116.8 L600.1 118.1 L600.7 119.4 L601.3 118.5 L601.9 117.5 L602.4 117.4 L603.0 116.9 L603.6 115.5 L604.2 115.1 L604.9 113.7 L605.5 112.0 L606.1 113.2 L606.8 114.1 L607.4 115.4 L608.0 117.7 L608.6 117.0 L609.2 117.3 L609.8 116.9 L610.4 115.1 L611.0 117.3 L611.6 119.0 L612.2 118.9 L612.8 120.1 L613.4 120.2 L614.0 120.5 L614.6 121.4 L615.2 120.6 L615.8 120.7 L616.4 122.2 L617.1 122.9 L617.7 123.2 L618.3 124.5 L618.9 125.2 L619.5 125.4 L620.1 125.4 L620.7 126.8 L621.3 127.7 L621.9 128.4 L622.5 129.0 L623.2 130.7 L623.8 131.5 L624.4 130.7 L625.0 130.0 L625.6 128.8 L626.2 127.2 L626.8 129.1 L627.4 130.5 L628.0 132.7 L628.6 134.1 L629.2 134.9 L629.9 135.3 L630.5 135.2 L631.1 134.9 L631.7 134.9 L632.3 136.6 L632.9 137.0 L633.4 137.0 L634.0 136.5 L634.6 136.8 L635.3 138.0 L635.9 138.8 L636.5 137.8 L637.1 136.9 L637.7 136.2 L638.3 134.7 L638.9 133.8 L639.5 134.4 L640.1 135.8 L640.8 136.9 L641.4 136.4 L642.0 136.5 L642.6 136.0 L643.2 135.7 L643.8 135.7 L644.4 135.2 L645.0 135.7 L645.6 135.2 L646.2 136.0 L646.8 138.0 L647.4 139.4 L648.0 140.2 L648.6 140.4 L649.2 140.9 L649.8 139.7 L650.4 138.9 L651.0 138.9 L651.6 139.4 L652.3 138.3 L652.9 137.7 L653.5 139.6 L654.1 140.7 L654.7 142.0 L655.3 142.1 L655.9 144.9 L656.5 147.4 L657.1 150.2 L657.7 151.9 L658.3 152.6 L659.0 153.7 L659.6 153.2 L660.2 154.1 L660.8 155.3 L661.4 156.7 L662.0 155.5 L662.6 154.5 L663.2 153.3 L663.8 154.4 L664.4 153.7 L665.0 153.3 L665.6 155.1 L666.2 156.6 L666.9 158.2 L667.5 159.0 L668.1 161.2 L668.6 161.9 L669.2 163.2 L669.8 161.4 L670.4 158.4 L671.0 156.0 L671.6 154.9 L672.2 153.5 L672.9 151.1 L673.5 148.7 L674.1 147.3 L674.8 146.5 L675.4 144.8 L676.0 142.7 L676.6 142.2 L677.3 141.1 L677.9 140.6 L678.5 142.7 L679.0 144.5 L679.6 145.4 L680.2 146.2 L680.8 146.0 L681.4 146.2 L682.0 146.7 L682.8 149.9 L683.6 152.6 L684.5 154.5 L685.5 161.1 L686.1 157.3 L686.7 153.6 L687.3 150.0 L687.9 148.4 L688.5 146.6 L689.1 145.5 L689.7 144.7 L690.3 143.5 L690.9 142.9 L691.5 141.5 L692.1 139.8 L692.8 139.5 L693.4 139.2 L694.0 137.8 L694.6 136.3 L695.2 136.1 L695.8 135.3 L696.4 134.5 L697.0 134.3 L697.6 133.3 L698.2 132.8 L698.8 130.7 L699.4 129.7 L700.0 129.0 L700.6 126.8 L701.2 125.5 L701.8 125.6 L702.4 125.6 L703.0 123.8 L703.7 123.4 L704.3 121.9 L704.9 122.6 L705.6 122.9 L706.2 122.3 L706.8 121.5 L707.4 121.8 L708.0 121.4 L708.6 123.0 L709.1 123.8 L709.7 124.6 L710.3 126.7 L711.0 128.4 L711.6 129.7 L712.3 131.3 L713.0 129.5 L713.8 127.7 L714.5 126.5 L715.2 124.2 L715.8 123.7 L716.4 122.8 L717.0 122.3 L717.6 121.9 L718.2 121.6 L718.8 121.4 L719.4 122.2 L720.0 122.5 L720.6 122.7 L721.2 122.9 L721.9 123.3 L722.5 122.9 L723.1 123.3 L723.7 123.3 L724.3 124.7 L724.9 125.7 L725.4 125.2 L726.0 124.6 L726.6 125.4 L727.3 126.8 L728.0 127.9 L728.6 130.3 L729.2 130.1 L729.8 130.8 L730.4 131.2 L731.0 133.1 L731.6 134.9 L732.2 135.4 L732.8 135.7 L733.4 137.0 L734.0 138.4 L734.6 140.1 L735.2 138.0 L735.8 136.5 L736.4 135.3 L737.0 134.7 L737.7 134.1 L738.3 134.4 L738.9 134.3 L739.6 133.3 L740.2 132.6 L740.8 131.8 L741.4 130.7 L742.0 130.9 L742.6 131.5 L743.1 132.7 L743.7 134.2 L744.3 134.8 L744.9 135.5 L745.4 137.6 L746.0 139.3 L746.7 135.8 L747.3 132.9 L748.0 130.8 L748.6 131.5 L749.2 132.0 L749.8 132.5 L750.4 134.9 L751.0 134.4 L751.6 133.0 L752.2 132.0 L752.8 131.1 L753.4 132.2 L754.0 134.7 L754.7 136.2 L755.3 136.9 L755.9 135.2 L756.5 134.6 L757.1 133.8 L757.7 133.6 L758.3 132.7 L758.9 131.5 L759.4 129.4 L760.0 127.8 L760.6 126.6 L761.2 125.3 L761.9 125.1 L762.5 123.8 L763.1 122.5 L763.8 121.7 L764.4 119.3 L765.0 117.8 L765.6 116.8 L766.2 117.2 L766.8 115.9 L767.4 116.5 L768.0 118.3 L768.6 119.8 L769.2 119.9 L769.8 120.8 L770.4 120.8 L771.0 119.4 L771.7 119.0 L772.3 118.5 L772.9 120.4 L773.5 121.2 L774.1 122.5 L774.7 122.7 L775.3 122.2 L775.9 120.8 L776.4 120.6 L777.0 118.5 L777.6 121.0 L778.2 122.1 L778.9 124.1 L779.5 126.0 L780.1 123.9 L780.8 123.3 L781.4 121.3 L782.0 119.6 L782.6 118.1 L783.2 117.3 L783.8 116.7 L784.4 116.5 L785.0 117.4 L785.6 119.1 L786.2 119.5 L786.8 120.8 L787.4 121.1 L788.0 122.3 L788.6 122.7 L789.2 123.2 L789.9 122.6 L790.5 123.2 L791.1 124.7 L791.7 125.1 L792.3 126.3 L792.9 127.2 L793.5 125.7 L794.1 126.5 L794.7 126.2 L795.3 125.5 L795.9 126.0 L796.5 125.7 L797.1 126.9 L797.8 128.4 L798.4 129.3 L799.0 130.5 L799.6 130.8 L800.2 131.6 L800.8 131.5 L801.4 131.4 L802.0 131.0 L802.6 129.4 L803.2 129.2 L803.8 127.8 L804.4 128.9 L805.0 129.2 L805.6 130.7 L806.2 130.6 L806.8 131.0 L807.5 131.6 L808.1 133.4 L808.7 134.8 L809.3 134.4 L809.9 134.8 L810.5 135.9 L811.1 136.8 L811.7 136.8 L812.3 137.5 L812.9 137.5 L813.6 137.5 L814.2 138.1 L814.8 138.3 L815.4 140.2 L816.0 140.6 L816.6 142.2 L817.2 144.0 L817.8 145.9 L818.4 147.7 L819.0 148.6 L819.6 149.7 L820.2 151.1 L820.8 151.8 L821.4 151.8 L822.0 152.2 L822.6 152.7 L823.2 152.6 L823.8 152.1 L824.5 151.7 L825.1 150.2 L825.7 149.8 L826.3 150.1 L826.9 150.9 L827.4 150.6 L828.0 151.0 L828.7 151.0 L829.3 151.5 L830.0 151.7" stroke="#1c9e1c" stroke-width="1.4" fill="none" stroke-linejoin="round" stroke-linecap="round"/>
<path d="M280.5 206.7V210.1M281.1 207.6V211.6M281.7 206.3V209.4M282.2 205.7V208.7M282.8 206.2V210.0M283.4 205.1V208.1M284.0 204.0V208.2M284.6 204.7V209.3M285.1 204.5V206.4M285.7 204.7V206.8M286.2 202.0V205.7M286.8 200.5V205.1M287.3 200.2V203.0M287.9 198.2V202.9M288.5 203.2V207.7M289.1 206.8V210.0M289.7 211.8V214.0M290.3 210.3V215.0M290.9 210.7V214.1M291.4 211.2V215.4M292.0 210.0V214.4M292.6 212.1V215.4M293.2 214.0V215.9M293.8 213.8V215.2M294.4 217.0V218.9M295.0 215.2V219.7M295.7 218.5V220.8M296.3 220.7V224.5M297.0 225.4V228.7M297.7 226.8V228.1M298.3 227.4V230.3M299.0 230.7V233.3M299.6 232.8V234.6M300.3 233.7V235.9M301.0 233.4V235.8M301.6 234.3V235.7M302.2 233.3V235.0M302.9 230.2V233.5M303.6 231.0V233.7M304.2 229.3V233.0M304.8 229.7V233.6M305.4 230.7V235.5M305.9 230.3V234.6M306.5 232.8V235.5M307.1 231.4V235.9M307.7 232.7V235.8M308.3 231.5V235.9M308.9 234.2V235.6M309.5 232.7V237.2M310.1 233.9V237.3M310.8 236.1V238.4M311.4 236.6V238.1M312.0 236.7V239.5M312.7 234.8V237.5M313.3 232.7V236.4M314.0 231.3V233.4M314.7 230.2V232.8M315.3 230.8V232.2M316.0 226.3V230.9M316.7 226.4V230.7M317.4 224.6V228.7M318.0 224.3V228.2M318.7 223.2V227.6M319.4 224.3V228.4M320.0 227.5V230.6M320.6 227.8V229.0M321.3 228.5V230.8M322.0 233.1V234.5M322.6 232.9V237.0M323.3 236.9V239.4M324.0 238.5V239.9M324.6 238.9V243.4M325.3 243.2V246.2M326.0 242.4V247.1M326.6 244.7V246.7M327.2 243.2V247.7M327.9 241.5V243.4M328.6 238.0V240.4M329.2 238.2V240.0M329.8 234.8V239.6M330.4 233.6V237.1M331.0 231.3V235.7M331.7 233.5V235.1M332.5 233.0V235.4M333.2 229.5V233.8M333.8 230.3V232.0M334.3 227.4V231.9M334.9 226.8V228.3M335.4 225.6V227.9M336.0 222.5V224.4M336.5 221.5V223.5M337.1 219.9V224.0M337.7 219.7V223.3M338.2 218.1V221.4M338.8 218.6V220.9M339.3 216.4V220.0M339.9 215.2V218.7M340.4 213.8V218.5M341.0 213.3V216.4M341.6 214.1V215.5M342.1 211.3V213.5M342.7 208.9V213.0M343.3 210.8V213.0M343.9 209.8V211.9M344.4 208.2V211.3M345.0 207.6V212.0M345.6 208.5V209.9M346.1 205.9V209.8M346.7 204.6V209.2M347.3 205.7V207.5M347.9 204.4V207.9M348.4 204.3V207.9M349.0 203.6V206.6M349.6 204.2V208.4M350.2 206.4V209.5M350.9 206.7V208.6M351.5 207.1V208.9M352.2 207.4V209.5M352.9 207.7V211.6M353.5 206.1V210.2M354.2 206.4V209.3M354.8 207.4V210.6M355.4 208.4V209.7M356.0 207.2V211.0M356.7 205.4V209.8M357.5 207.5V209.2M358.2 207.7V210.7M358.9 207.1V209.9M359.5 203.8V207.9M360.1 204.0V208.5M360.8 204.0V207.2M361.4 204.2V206.2M362.0 203.8V206.2M362.6 206.4V208.8M363.3 203.3V206.3M364.0 202.1V205.4M364.7 201.3V205.5M365.4 201.6V203.7M366.0 200.8V204.5M366.7 197.7V201.7M367.4 197.8V200.5M368.0 202.0V203.9M368.6 202.8V204.1M369.3 202.9V206.9M370.0 203.8V205.5M370.7 201.0V204.9M371.3 201.8V203.9M372.0 200.2V202.0M372.7 200.5V202.8M373.3 199.9V201.4M374.0 199.8V204.6M374.7 199.7V203.5M375.3 202.3V204.4M376.0 203.2V205.3M376.6 201.2V205.8M377.3 204.4V206.8M377.9 203.2V206.6M378.5 203.1V205.8M379.2 201.0V202.4M379.9 198.3V202.0M380.5 196.7V200.1M381.1 199.8V202.7M381.8 202.8V207.0M382.4 203.5V207.5M383.0 203.4V205.9M383.6 204.0V207.2M384.3 204.8V206.7M385.1 206.0V208.9M385.8 208.4V211.2M386.4 207.0V210.6M387.0 207.2V209.1M387.6 207.7V209.1M388.3 207.3V209.8M389.0 209.1V210.4M389.7 209.1V211.2M390.4 205.0V209.5M391.0 202.8V205.0M391.7 206.9V208.6M392.4 207.7V210.2M393.0 207.6V211.4M393.7 209.5V210.8M394.3 208.4V211.0M394.9 207.5V211.9M395.4 208.6V212.6M396.0 208.8V210.2M396.6 208.4V210.5M397.2 209.4V211.1M397.8 209.5V210.8M398.4 210.3V213.0M399.0 212.1V213.8M399.6 212.3V214.4M400.3 209.8V213.4M401.0 210.9V212.8M401.6 209.8V213.6M402.2 211.3V213.9M402.9 211.3V213.3M403.6 212.2V214.7M404.2 213.4V214.8M404.8 213.0V216.5M405.3 213.5V217.6M405.9 212.4V214.7M406.4 209.2V213.7M407.0 210.2V213.8M407.6 210.1V214.7M408.2 210.9V212.9M408.9 211.2V212.7M409.5 210.6V213.2M410.1 210.5V213.1M410.8 209.3V212.3M411.5 210.3V212.0M412.1 209.3V212.2M412.6 180.8V184.4M413.4 152.1V153.7M414.2 178.1V180.9M415.2 183.8V187.1M416.0 179.0V182.2M416.7 181.3V182.6M417.4 181.5V184.0M418.0 178.2V180.9M418.6 177.0V180.0M419.3 176.5V179.4M420.0 177.0V179.1M421.0 173.4V175.9M421.6 172.2V175.4M422.2 174.0V177.6M422.8 171.5V174.4M423.4 166.5V171.1M424.0 168.9V172.2M424.6 169.8V173.7M425.2 166.2V169.7M425.8 163.2V165.9M426.4 165.0V169.1M427.0 167.2V169.8M427.6 163.6V164.9M428.2 159.6V162.6M429.2 160.7V163.2M430.0 150.5V152.2M430.5 141.7V143.8M430.9 116.8V118.8M431.1 91.5V94.7M431.7 88.1V90.2M432.2 82.1V85.6M432.8 77.2V80.6M433.4 77.9V82.1M434.0 78.5V80.9M434.6 76.0V80.3M435.2 75.7V79.5M435.8 69.4V73.1M436.4 59.9V64.0M437.0 49.3V52.7M437.6 37.5V40.7M438.2 34.5V36.7M438.8 30.8V33.9M439.4 38.2V40.3M440.0 44.4V46.2M440.6 37.5V39.2M441.3 32.0V33.4M441.9 32.8V36.5M442.5 35.1V38.0M443.1 41.2V44.1M443.7 49.8V54.1M444.3 47.7V49.1M444.9 45.9V48.9M445.5 52.5V55.2M446.1 60.0V62.1M446.8 57.3V59.7M447.4 57.0V61.0M448.0 62.7V66.9M448.6 69.5V72.2M449.2 71.9V75.4M449.8 71.8V75.9M450.4 72.1V74.6M451.0 69.6V71.6M451.6 68.0V69.2M452.2 63.4V67.9M452.8 67.2V68.9M453.3 68.6V71.3M453.9 72.7V75.4M454.5 73.4V78.1M455.2 76.5V80.2M455.8 80.3V81.7M456.4 81.0V84.8M457.1 81.3V82.9M457.7 82.7V84.0M458.3 81.7V84.6M458.9 81.0V83.3M459.4 79.0V83.2M460.0 78.7V81.3M460.6 80.1V84.1M461.3 80.1V82.7M461.9 80.4V83.6M462.5 81.6V83.3M463.1 83.3V84.9M463.7 82.7V84.8M464.3 84.0V85.6M464.9 86.0V87.3M465.4 87.3V89.0M466.0 87.1V89.3M466.7 84.6V87.6M467.3 81.0V83.1M468.0 80.7V82.2M468.6 76.8V79.1M469.2 76.7V78.6M469.8 74.4V79.2M470.4 74.3V78.6M471.0 76.1V78.8M471.6 74.6V77.2M472.2 75.2V78.4M472.8 74.6V78.0M473.4 67.0V71.5M474.0 57.4V62.2M474.6 55.1V59.3M475.3 52.6V54.5M475.9 54.2V56.0M476.6 54.7V56.1M477.2 54.8V58.7M478.2 46.7V49.7M479.0 50.1V52.1M479.8 51.0V52.2M480.6 49.0V53.1M481.3 48.2V52.0M481.9 51.4V55.5M482.5 54.5V58.4M483.1 53.7V55.3M483.8 52.9V55.6M484.4 52.5V54.6M485.0 51.7V53.0M485.6 51.2V53.2M486.2 51.1V53.6M486.8 50.1V54.2M487.4 51.3V54.8M488.0 52.7V54.9M488.6 51.1V53.4M489.2 52.0V54.4M489.8 53.0V54.9M490.4 53.4V56.5M491.0 52.6V54.5M491.6 53.7V55.4M492.2 51.5V54.3M492.9 52.1V55.1M493.5 53.2V55.6M494.1 52.8V57.4M494.7 53.6V57.9M495.3 53.7V57.6M495.9 53.8V58.5M496.5 54.3V59.0M497.1 57.5V60.1M497.7 55.4V57.3M498.4 55.9V59.5M499.0 53.3V55.7M499.6 54.5V56.9M500.2 53.9V55.6M500.8 54.1V56.7M501.4 54.8V56.8M502.0 54.7V59.1M502.6 55.6V59.1M503.2 54.0V57.2M503.8 55.1V59.3M504.4 54.7V57.6M505.0 55.3V58.0M505.6 56.4V58.5M506.2 56.1V59.4M506.8 57.5V58.8M507.4 56.4V59.2M508.0 56.5V59.8M508.6 57.1V58.8M509.2 57.0V61.8M509.8 58.4V60.7M510.4 56.0V60.8M511.1 56.1V60.4M511.7 56.7V61.5M512.3 60.6V62.6M512.9 62.4V65.9M513.5 60.4V64.6M514.1 60.4V63.5M514.7 59.6V61.0M515.3 57.1V60.8M515.9 56.7V60.8M516.6 57.3V60.5M517.2 54.9V56.8M517.8 52.6V56.1M518.4 54.3V57.5M519.0 51.9V54.8M519.6 53.2V57.3M520.2 52.7V56.6M520.8 50.8V55.3M521.4 50.0V51.7M522.0 46.4V47.9M522.6 43.5V45.9M523.2 37.5V41.7M523.8 37.2V39.1M524.4 32.7V36.9M525.0 28.4V32.8M525.6 29.4V34.2M526.2 33.2V36.7M526.9 35.2V39.1M527.5 38.0V41.6M528.1 36.9V38.2M528.7 35.9V38.2M529.3 40.4V42.6M529.9 43.0V46.7M530.5 45.2V46.8M531.1 44.8V47.7M531.7 49.2V50.8M532.3 48.7V52.1M532.9 53.2V55.1M533.5 53.3V57.0M534.1 54.4V56.9M534.7 55.7V58.4M535.4 57.4V60.8M536.0 59.5V63.7M536.6 62.0V64.8M537.2 62.3V66.9M537.8 62.4V66.1M538.4 62.9V66.2M539.0 62.8V67.1M539.6 65.4V69.7M540.2 68.2V71.1M540.8 69.1V71.6M541.6 66.0V69.3M542.4 65.3V66.7M543.2 70.1V72.4M543.8 68.3V72.9M544.5 69.8V73.5M545.1 69.4V71.5M545.7 70.4V72.1M546.3 70.0V72.1M546.9 71.3V73.7M547.7 72.5V76.8M548.5 73.5V76.7M549.1 74.8V79.3M549.6 78.3V80.8M550.2 78.7V82.5M550.8 80.6V83.1M551.4 79.1V83.7M552.0 81.0V84.5M552.6 81.3V83.8M553.3 81.9V84.2M553.9 82.8V86.2M554.5 82.3V87.0M555.2 85.0V87.7M555.8 85.6V89.2M556.4 83.9V88.7M557.0 85.9V88.7M557.6 85.0V88.5M558.2 84.6V89.3M558.8 86.4V88.9M559.4 88.2V90.8M560.0 88.9V90.4M560.6 89.5V93.0M561.2 88.2V92.1M561.8 89.6V93.7M562.4 88.3V92.3M563.0 88.6V91.5M563.6 91.0V95.3M564.2 89.5V94.0M564.8 93.2V95.7M565.4 92.8V95.9M566.1 93.1V97.1M566.7 93.8V96.8M567.3 93.1V96.3M567.9 93.4V94.9M568.4 93.2V95.4M569.0 90.9V92.9M569.6 92.0V93.4M570.3 93.5V96.4M570.9 94.7V97.6M571.5 96.3V97.8M572.2 97.7V99.5M572.8 97.0V100.1M573.4 97.6V101.0M574.0 97.4V102.1M574.6 99.0V100.2M575.2 99.0V103.1M575.8 99.1V102.9M576.4 100.0V103.1M577.0 101.8V103.4M577.6 101.3V105.9M578.2 101.8V106.1M578.8 103.1V105.8M579.5 99.9V102.0M580.1 95.6V100.1M580.8 93.9V96.8M581.4 96.3V100.7M581.9 100.3V103.5M582.5 103.9V108.3M583.1 106.2V108.5M583.8 106.7V108.8M584.4 107.1V109.8M585.0 108.2V110.7M585.6 108.8V111.6M586.1 108.9V113.2M586.7 111.8V114.9M587.3 113.8V116.4M587.9 115.0V116.6M588.4 115.1V117.5M589.0 117.0V119.0M589.7 115.6V118.6M590.3 119.2V121.8M591.0 119.7V120.9M591.6 118.6V123.2M592.2 118.9V122.2M592.8 121.1V123.3M593.4 121.3V124.6M594.0 119.6V122.6M594.6 118.0V121.9M595.2 117.6V119.1M595.8 117.3V119.4M596.4 115.7V118.4M597.0 114.0V116.6M597.7 112.5V116.2M598.3 111.8V116.5M598.9 114.3V116.7M599.5 115.3V119.5M600.1 115.4V118.9M600.7 116.5V120.5M601.3 116.9V120.3M601.9 115.6V120.1M602.4 117.7V118.9M603.0 115.1V119.0M603.6 115.4V116.6M604.2 114.1V116.8M604.9 112.2V116.9M605.5 111.8V113.3M606.1 112.3V115.1M606.8 112.7V115.3M607.4 113.2V116.0M608.0 117.0V119.3M608.6 115.5V117.0M609.2 115.5V119.7M609.8 114.5V117.7M610.4 113.9V115.5M611.0 115.1V119.8M611.6 116.2V120.7M612.2 117.6V120.3M612.8 117.3V121.5M613.4 117.9V122.3M614.0 119.7V121.0M614.6 120.4V123.0M615.2 118.3V122.8M615.8 118.6V122.3M616.4 119.4V123.4M617.1 120.3V124.2M617.7 121.0V124.3M618.3 122.6V125.0M618.9 124.1V126.6M619.5 123.7V126.7M620.1 124.4V127.7M620.7 125.7V128.2M621.3 127.2V130.1M621.9 127.6V129.9M622.5 127.5V129.5M623.2 129.0V132.8M623.8 129.6V131.7M624.4 128.3V132.5M625.0 128.0V131.8M625.6 127.2V130.6M626.2 125.7V130.4M626.8 127.7V130.5M627.4 130.0V132.1M628.0 131.5V133.1M628.6 131.0V135.3M629.2 133.2V136.9M629.9 133.4V136.6M630.5 135.2V137.0M631.1 133.5V137.5M631.7 134.7V136.2M632.3 135.0V137.0M632.9 135.6V138.8M633.4 136.7V138.3M634.0 135.6V138.9M634.6 134.9V139.4M635.3 137.6V140.2M635.9 136.5V140.3M636.5 136.1V140.4M637.1 135.3V137.5M637.7 135.6V136.9M638.3 133.3V135.4M638.9 132.0V134.1M639.5 132.4V135.4M640.1 134.2V136.4M640.8 136.1V139.1M641.4 136.2V138.0M642.0 134.6V138.9M642.6 134.9V138.0M643.2 134.5V137.6M643.8 134.0V138.5M644.4 133.2V135.3M645.0 133.2V137.7M645.6 132.7V136.7M646.2 134.4V137.2M646.8 137.0V140.8M647.4 138.0V141.0M648.0 138.4V140.9M648.6 137.3V141.9M649.2 138.9V143.5M649.8 139.8V141.2M650.4 138.3V139.8M651.0 139.1V140.7M651.6 139.0V141.3M652.3 137.9V139.3M652.9 136.0V137.5M653.5 138.9V142.2M654.1 139.6V143.2M654.7 140.0V144.1M655.3 141.4V142.9M655.9 144.0V145.9M656.5 146.2V148.7M657.1 149.7V151.6M657.7 150.5V153.2M658.3 151.8V153.3M659.0 153.0V156.2M659.6 150.9V154.1M660.2 152.6V154.9M660.8 154.3V158.0M661.4 155.2V159.9M662.0 154.0V158.5M662.6 151.3V155.9M663.2 152.0V154.9M663.8 152.8V156.5M664.4 152.8V156.2M665.0 152.6V154.1M665.6 151.9V156.5M666.2 156.5V158.1M666.9 155.0V159.6M667.5 159.0V160.4M668.1 159.4V163.1M668.6 160.7V164.0M669.2 160.1V164.2M669.8 161.3V162.7M670.4 156.7V161.4M671.0 154.3V157.0M671.6 152.7V155.2M672.2 151.0V155.0M672.9 149.5V152.8M673.5 147.9V150.3M674.1 145.4V148.2M674.8 143.7V148.1M675.4 143.4V145.2M676.0 141.8V144.7M676.6 140.5V142.9M677.3 138.9V142.4M677.9 138.6V141.7M678.5 139.9V144.2M679.0 143.1V145.1M679.6 144.6V147.0M680.2 145.0V148.6M680.8 143.6V146.7M681.4 143.7V147.6M682.0 145.5V147.5M682.8 147.3V152.0M683.6 152.2V154.7M684.5 151.9V156.7M685.5 160.9V162.5M686.1 155.0V159.0M686.7 151.3V155.4M687.3 149.0V151.3M687.9 146.5V150.3M688.5 143.5V147.7M689.1 143.8V146.8M689.7 144.8V146.2M690.3 142.0V143.7M690.9 141.6V146.0M691.5 138.9V143.5M692.1 136.8V141.4M692.8 138.5V142.3M693.4 137.5V139.4M694.0 136.7V140.4M694.6 135.3V139.1M695.2 134.4V137.2M695.8 134.0V135.7M696.4 131.3V135.9M697.0 133.0V134.9M697.6 132.3V133.6M698.2 131.1V132.9M698.8 129.3V132.4M699.4 128.6V131.9M700.0 128.4V131.5M700.6 125.5V127.0M701.2 124.4V125.9M701.8 124.5V128.5M702.4 123.5V126.5M703.0 122.7V125.1M703.7 122.8V125.1M704.3 119.4V124.1M704.9 121.6V125.0M705.6 120.8V123.7M706.2 121.0V125.6M706.8 121.4V122.7M707.4 119.6V122.3M708.0 119.9V121.6M708.6 120.5V124.4M709.1 122.6V123.8M709.7 122.5V126.6M710.3 124.9V128.4M711.0 126.5V128.3M711.6 127.6V129.9M712.3 130.4V132.6M713.0 128.2V130.8M713.8 125.6V129.0M714.5 126.0V128.5M715.2 122.3V125.6M715.8 122.1V125.2M716.4 122.4V124.8M717.0 122.1V124.1M717.6 120.6V124.8M718.2 120.7V122.5M718.8 118.6V123.3M719.4 121.8V123.6M720.0 121.6V123.6M720.6 122.7V124.4M721.2 121.0V123.2M721.9 121.1V124.8M722.5 121.3V124.5M723.1 121.0V125.6M723.7 121.0V123.6M724.3 122.7V125.7M724.9 124.3V127.6M725.4 122.9V125.8M726.0 123.0V126.0M726.6 124.6V128.1M727.3 125.6V127.8M728.0 127.8V129.3M728.6 129.9V132.0M729.2 127.5V131.6M729.8 128.5V133.0M730.4 129.9V132.6M731.0 130.8V135.4M731.6 133.0V136.0M732.2 133.3V137.5M732.8 133.9V136.3M733.4 136.7V138.7M734.0 137.3V141.4M734.6 138.2V142.8M735.2 136.4V140.4M735.8 135.0V139.1M736.4 135.0V136.8M737.0 133.0V135.3M737.7 130.9V135.4M738.3 132.6V135.6M738.9 132.5V136.5M739.6 132.0V136.4M740.2 129.9V133.5M740.8 129.2V132.8M741.4 129.1V133.9M742.0 129.1V131.4M742.6 130.2V133.9M743.1 130.5V135.3M743.7 133.8V135.5M744.3 134.9V136.3M744.9 134.1V138.1M745.4 135.6V139.9M746.0 137.3V141.9M746.7 134.0V137.0M747.3 130.7V133.2M748.0 130.5V132.2M748.6 130.8V132.8M749.2 130.4V134.4M749.8 130.6V133.6M750.4 133.2V135.4M751.0 133.0V136.5M751.6 130.3V134.9M752.2 130.6V135.1M752.8 130.9V133.1M753.4 131.4V134.8M754.0 132.4V136.4M754.7 135.1V137.3M755.3 134.5V137.4M755.9 133.1V137.4M756.5 133.7V136.6M757.1 132.1V134.2M757.7 131.5V134.8M758.3 130.7V133.0M758.9 130.5V131.9M759.4 128.8V131.9M760.0 125.9V129.4M760.6 124.7V127.4M761.2 124.8V127.7M761.9 124.2V125.8M762.5 122.5V126.2M763.1 121.2V124.4M763.8 120.2V124.8M764.4 118.3V120.4M765.0 115.4V120.2M765.6 116.3V118.2M766.2 115.8V117.2M766.8 113.9V117.0M767.4 115.1V118.9M768.0 117.7V120.0M768.6 118.5V122.0M769.2 118.3V121.1M769.8 119.9V121.5M770.4 119.2V123.9M771.0 117.8V119.2M771.7 118.3V120.5M772.3 116.4V119.2M772.9 119.2V121.9M773.5 119.0V122.9M774.1 121.1V124.6M774.7 120.0V123.5M775.3 119.6V123.3M775.9 120.1V121.5M776.4 119.1V120.4M777.0 117.2V119.8M777.6 121.2V122.7M778.2 120.0V124.2M778.9 122.1V125.4M779.5 122.9V127.6M780.1 122.2V124.5M780.8 121.1V125.4M781.4 119.8V122.4M782.0 116.9V121.3M782.6 116.5V120.5M783.2 115.6V118.4M783.8 115.3V118.0M784.4 115.6V117.9M785.0 115.7V118.4M785.6 117.0V121.0M786.2 118.8V121.7M786.8 119.1V122.0M787.4 119.9V124.3M788.0 120.1V124.1M788.6 121.4V125.0M789.2 122.5V124.8M789.9 120.6V125.2M790.5 121.3V124.9M791.1 122.4V126.0M791.7 123.2V127.2M792.3 123.6V128.3M792.9 124.3V128.1M793.5 124.9V127.6M794.1 125.6V127.8M794.7 125.0V127.0M795.3 122.5V127.3M795.9 122.9V127.3M796.5 124.7V128.0M797.1 124.5V128.8M797.8 127.1V130.4M798.4 127.8V131.8M799.0 128.3V131.6M799.6 129.1V132.8M800.2 131.0V134.2M800.8 131.2V132.9M801.4 130.7V133.1M802.0 128.2V132.8M802.6 127.9V131.1M803.2 127.0V130.0M803.8 126.8V130.3M804.4 126.7V130.3M805.0 127.0V131.1M805.6 130.0V131.8M806.2 129.2V132.1M806.8 128.8V133.6M807.5 129.0V133.6M808.1 130.5V134.5M808.7 134.0V136.3M809.3 133.2V136.9M809.9 133.0V135.6M810.5 134.7V137.2M811.1 135.9V137.2M811.7 134.3V137.9M812.3 137.1V139.4M812.9 134.7V139.3M813.6 135.8V137.7M814.2 138.0V139.5M814.8 135.9V139.8M815.4 139.1V142.1M816.0 140.6V141.9M816.6 139.5V143.8M817.2 142.5V146.3M817.8 145.4V147.9M818.4 146.7V148.7M819.0 147.3V149.6M819.6 147.7V151.9M820.2 150.3V153.7M820.8 150.2V152.2M821.4 149.4V152.8M822.0 149.5V154.2M822.6 151.2V154.0M823.2 151.3V155.5M823.8 149.7V153.3M824.5 150.8V153.3M825.1 150.0V151.9M825.7 147.1V151.4M826.3 148.3V150.8M826.9 148.1V151.9M827.4 147.8V151.5M828.0 148.9V153.2M828.7 148.6V151.9M829.3 150.5V151.9M830.0 149.5V154.2" stroke="#149414" stroke-width=".6" fill="none" opacity=".9"/>
<path d="M113.9 171 L114.6 171.5 L120.6 192 L117.6 192 L113.9 180 Z" fill="#1c9e1c"/>
<path d="M413.4 153.7V186M438.2 30V60M441.3 31V66M444.9 44V92M452.2 62V84M436.4 60V96M525 30.5V46M580.8 93V106M669.2 150V165M685.5 148V162M430.9 96V150M192.6 186V191.5M367.4 196V205M380.5 195V206" stroke="#1fa51f" stroke-width=".9" fill="none"/>
<circle cx="438.1" cy="52.8" r="5.9" fill="url(#mg)"/>
<circle cx="449" cy="80.8" r="5.9" fill="url(#mr)"/>
<circle cx="477.2" cy="48" r="5.9" fill="url(#mr)"/>
<circle cx="546.9" cy="69.4" r="5.9" fill="url(#mr)"/>
<circle cx="563.5" cy="88.8" r="5.9" fill="url(#mg)"/>
<circle cx="584.4" cy="105.8" r="5.9" fill="url(#mr)"/>
<circle cx="589.8" cy="117.2" r="5.9" fill="url(#mr)"/>
<circle cx="617.2" cy="121.6" r="5.9" fill="url(#mg)"/>
<circle cx="657.7" cy="155" r="5.9" fill="url(#mr)"/>
<circle cx="665.5" cy="155" r="5.9" fill="url(#mg)"/>
<circle cx="693.1" cy="137.2" r="5.9" fill="url(#mg)"/>
<circle cx="703.5" cy="122.5" r="5.9" fill="url(#mr)"/>
<ellipse cx="811.8" cy="139.5" rx="4.8" ry="6.4" fill="#84847c" opacity=".9"/><ellipse cx="811.8" cy="139.5" rx="2.9" ry="4.5" fill="#c4bfac"/><circle cx="812.4" cy="137.3" r="1.3" fill="#ff4a18"/><circle cx="811.1999999999999" cy="142.1" r="1.3" fill="#ff4a18"/>
<circle cx="412.8" cy="177" r="5.9" fill="url(#mg)"/>
<circle cx="346.2" cy="206.6" r="5.9" fill="url(#mr)"/>
<ellipse cx="325.5" cy="240.5" rx="4.8" ry="6.4" fill="#84847c" opacity=".9"/><ellipse cx="325.5" cy="240.5" rx="2.9" ry="4.5" fill="#c4bfac"/><circle cx="326.1" cy="238.3" r="1.3" fill="#ff4a18"/><circle cx="324.9" cy="243.1" r="1.3" fill="#ff4a18"/>
<circle cx="284.8" cy="208.5" r="5.9" fill="url(#mg)"/>
<path d="M115.4 19 L119.4 19 L117.4 21.3 Z" fill="#f4f4f4"/>
<text x="122" y="22" font-size="5.0" fill="#e6e6e6" text-anchor="start">EURUSD,M1&#160; 1.03128 1.03130 1.03127 1.03128</text>
<text x="117.5" y="77.4" font-size="5.1" fill="#e6e6e6" text-anchor="start">#987300238 tp</text>
<text x="117.5" y="87.8" font-size="5.1" fill="#e6e6e6" text-anchor="start">#987300238 buy 0.10</text>
<text x="117.5" y="120.8" font-size="5.1" fill="#e6e6e6" text-anchor="start">#987307576 buy 0.19</text>
<text x="117.5" y="140.8" font-size="5.1" fill="#e6e6e6" text-anchor="start">#987346055 sell 0.07</text>
<text x="117.5" y="172.4" font-size="5.1" fill="#e6e6e6" text-anchor="start">#987346055 tp</text>
<text x="1000.6" y="22.2" font-size="5.1" fill="#e6e6e6" text-anchor="end">Profit FX 1.96 EA</text>
<circle cx="1005.3" cy="20.4" r="2.5" fill="none" stroke="#ddd" stroke-width=".6"/><path d="M1004.2 21.2 Q1005.3 22.2 1006.4 21.2" stroke="#ddd" stroke-width=".4" fill="none"/><circle cx="1004.4" cy="19.8" r=".35" fill="#ddd"/><circle cx="1006.2" cy="19.8" r=".35" fill="#ddd"/>
<text x="1013.2" y="24.4" font-size="5.2" fill="#e0e0e0" text-anchor="start">1.0</text>
<text x="1013.2" y="42.669999999999995" font-size="5.2" fill="#e0e0e0" text-anchor="start">1.0</text>
<text x="1013.2" y="60.94" font-size="5.2" fill="#e0e0e0" text-anchor="start">1.0</text>
<text x="1013.2" y="79.21000000000001" font-size="5.2" fill="#e0e0e0" text-anchor="start">1.0</text>
<text x="1013.2" y="97.48" font-size="5.2" fill="#e0e0e0" text-anchor="start">1.0</text>
<text x="1013.2" y="115.75" font-size="5.2" fill="#e0e0e0" text-anchor="start">1.0</text>
<text x="1013.2" y="134.02" font-size="5.2" fill="#e0e0e0" text-anchor="start">1.0</text>
<text x="1013.2" y="152.29" font-size="5.2" fill="#e0e0e0" text-anchor="start">1.0</text>
<text x="1013.2" y="170.56" font-size="5.2" fill="#e0e0e0" text-anchor="start">1.0</text>
<text x="1013.2" y="188.83" font-size="5.2" fill="#e0e0e0" text-anchor="start">1.0</text>
<text x="1013.2" y="207.1" font-size="5.2" fill="#e0e0e0" text-anchor="start">1.0</text>
<text x="1013.2" y="225.37" font-size="5.2" fill="#e0e0e0" text-anchor="start">1.0</text>
<text x="1013.2" y="243.64000000000001" font-size="5.2" fill="#e0e0e0" text-anchor="start">1.0</text>
<text x="1013.2" y="261.90999999999997" font-size="5.2" fill="#e0e0e0" text-anchor="start">1.0</text>
<text x="1013.2" y="280.17999999999995" font-size="5.2" fill="#e0e0e0" text-anchor="start">1.0</text>
<text x="1013.2" y="298.45" font-size="5.2" fill="#e0e0e0" text-anchor="start">1.0</text>
<rect x="1011.8" y="148.2" width="7" height="5.8" fill="#eee"/>
<text x="1013.2" y="152.9" font-size="5.2" fill="#111" text-anchor="start">1.0</text>
<path d="M1011.5 13.4 l-2.4 0 l2.4 2.6 l2.4 -2.6z" fill="#9aa6b4" transform="translate(-182.5,0)"/>
<rect x="1018.8" y="13.0" width="6" height="297.0" fill="#f0f0f0"/><path d="M1021.2 13 V309.5" stroke="#fff" stroke-width=".8"/><path d="M1019.0 13 V309.5" stroke="#8a8a8a" stroke-width=".5"/>
<path d="M113.80 298.4 V300.59999999999997" stroke="#ddd" stroke-width=".7"/>
<text x="115.0" y="305.5" font-size="4.8" fill="#e8e8e8" text-anchor="start">3 Feb 2025</text>
<path d="M148.50 298.4 V300.59999999999997" stroke="#ddd" stroke-width=".7"/>
<text x="149.7" y="305.5" font-size="4.8" fill="#e8e8e8" text-anchor="start">3 Feb 19:16</text>
<path d="M183.21 298.4 V300.59999999999997" stroke="#ddd" stroke-width=".7"/>
<text x="184.41" y="305.5" font-size="4.8" fill="#e8e8e8" text-anchor="start">3 Feb 19:48</text>
<path d="M217.91 298.4 V300.59999999999997" stroke="#ddd" stroke-width=".7"/>
<text x="219.11" y="305.5" font-size="4.8" fill="#e8e8e8" text-anchor="start">3 Feb 20:20</text>
<path d="M252.62 298.4 V300.59999999999997" stroke="#ddd" stroke-width=".7"/>
<text x="253.82" y="305.5" font-size="4.8" fill="#e8e8e8" text-anchor="start">3 Feb 20:52</text>
<path d="M287.32 298.4 V300.59999999999997" stroke="#ddd" stroke-width=".7"/>
<text x="288.52" y="305.5" font-size="4.8" fill="#e8e8e8" text-anchor="start">3 Feb 21:24</text>
<path d="M322.02 298.4 V300.59999999999997" stroke="#ddd" stroke-width=".7"/>
<text x="323.22" y="305.5" font-size="4.8" fill="#e8e8e8" text-anchor="start">3 Feb 21:56</text>
<path d="M356.73 298.4 V300.59999999999997" stroke="#ddd" stroke-width=".7"/>
<text x="357.93" y="305.5" font-size="4.8" fill="#e8e8e8" text-anchor="start">3 Feb 22:28</text>
<path d="M391.43 298.4 V300.59999999999997" stroke="#ddd" stroke-width=".7"/>
<text x="392.63" y="305.5" font-size="4.8" fill="#e8e8e8" text-anchor="start">3 Feb 23:00</text>
<path d="M426.14 298.4 V300.59999999999997" stroke="#ddd" stroke-width=".7"/>
<text x="427.34" y="305.5" font-size="4.8" fill="#e8e8e8" text-anchor="start">3 Feb 23:32</text>
<path d="M460.84 298.4 V300.59999999999997" stroke="#ddd" stroke-width=".7"/>
<text x="462.04" y="305.5" font-size="4.8" fill="#e8e8e8" text-anchor="start">4 Feb 00:10</text>
<path d="M495.54 298.4 V300.59999999999997" stroke="#ddd" stroke-width=".7"/>
<text x="496.74" y="305.5" font-size="4.8" fill="#e8e8e8" text-anchor="start">4 Feb 00:42</text>
<path d="M530.25 298.4 V300.59999999999997" stroke="#ddd" stroke-width=".7"/>
<text x="531.45" y="305.5" font-size="4.8" fill="#e8e8e8" text-anchor="start">4 Feb 01:14</text>
<path d="M564.95 298.4 V300.59999999999997" stroke="#ddd" stroke-width=".7"/>
<text x="566.15" y="305.5" font-size="4.8" fill="#e8e8e8" text-anchor="start">4 Feb 01:46</text>
<path d="M599.66 298.4 V300.59999999999997" stroke="#ddd" stroke-width=".7"/>
<text x="600.86" y="305.5" font-size="4.8" fill="#e8e8e8" text-anchor="start">4 Feb 02:18</text>
<path d="M634.36 298.4 V300.59999999999997" stroke="#ddd" stroke-width=".7"/>
<text x="635.56" y="305.5" font-size="4.8" fill="#e8e8e8" text-anchor="start">4 Feb 02:50</text>
<path d="M669.06 298.4 V300.59999999999997" stroke="#ddd" stroke-width=".7"/>
<text x="670.26" y="305.5" font-size="4.8" fill="#e8e8e8" text-anchor="start">4 Feb 03:22</text>
<path d="M703.77 298.4 V300.59999999999997" stroke="#ddd" stroke-width=".7"/>
<text x="704.97" y="305.5" font-size="4.8" fill="#e8e8e8" text-anchor="start">4 Feb 03:54</text>
<path d="M738.47 298.4 V300.59999999999997" stroke="#ddd" stroke-width=".7"/>
<text x="739.67" y="305.5" font-size="4.8" fill="#e8e8e8" text-anchor="start">4 Feb 04:26</text>
<path d="M773.18 298.4 V300.59999999999997" stroke="#ddd" stroke-width=".7"/>
<text x="774.38" y="305.5" font-size="4.8" fill="#e8e8e8" text-anchor="start">4 Feb 04:58</text>
<path d="M807.88 298.4 V300.59999999999997" stroke="#ddd" stroke-width=".7"/>
<text x="809.08" y="305.5" font-size="4.8" fill="#e8e8e8" text-anchor="start">4 Feb 05:30</text>
</svg>
<div class="abs" style="left:115px;top:191.6px;width:165.5px;height:91.3px;background:#fff;border:1px solid #10109a;box-sizing:border-box"></div>
<div class="abs" style="left:115px;top:191.6px;width:165.5px;height:13.3px;background:#0c0c9c"></div>
<div class="t" style="left:132.5px;top:193.6px;font-size:9px;color:#fff">2025.02.04</div>
<div class="t" style="left:185.6px;top:193.6px;font-size:9px;color:#fff">Tuesday</div>
<div class="t" style="left:227px;top:193.6px;font-size:9px;color:#fff">05:50:17</div>
<div class="ip r" style="right:811.8px;top:205.90px">Balance</div>
<div class="ip r" style="right:747.8px;top:205.90px;color:#2b2b9c">1271.55 USD</div>
<div class="ip r" style="right:811.8px;top:214.57px">Equiti</div>
<div class="ip r" style="right:747.8px;top:214.57px;color:#2b2b9c">1236.10 USD</div>
<div class="ip r" style="right:811.8px;top:223.24px">EA profit</div>
<div class="ip r" style="right:747.8px;top:223.24px;color:#c0392b">-35.45 USD</div>
<div class="ip r" style="right:811.8px;top:231.91px">Leverage</div>
<div class="ip r" style="right:747.8px;top:231.91px;color:#2b2b9c">1 : 500</div>
<div class="ip r" style="right:811.8px;top:240.58px">Buy 2 (0.29)</div>
<div class="ip r" style="right:747.8px;top:240.58px;color:#c0392b">-36.78 USD</div>
<div class="ip r" style="right:811.8px;top:249.25px">Sell 1 (0.07)</div>
<div class="ip r" style="right:747.8px;top:249.25px;color:#2b2b9c">1.33 USD</div>
<div class="ip r" style="right:811.8px;top:257.92px">Spread</div>
<div class="ip r" style="right:747.8px;top:257.92px;color:#2b2b9c">10</div>
<div class="ip r" style="right:811.8px;top:266.59px">Stops level</div>
<div class="ip r" style="right:747.8px;top:266.59px;color:#2b2b9c">0</div>
<svg class="abs" style="left:0;top:0" width="1024" height="494" viewBox="0 0 1024 494">
<g stroke="#3a46d8" stroke-width=".7" stroke-dasharray="1 1.5" fill="none"><path d="M118.8 205.4 H193"/><path d="M132 206 L145.2 229.4"/><path d="M145.2 229.4 L132.2 251.4"/><path d="M184.5 207 L146.2 245.6"/></g>
<path d="M134.5 257.2 L280 244.1" stroke="#d04020" stroke-width=".8" stroke-dasharray="1 1.6" fill="none"/>
<path d="M238 244.6 H278" stroke="#d04020" stroke-width=".7" stroke-dasharray="2 1.4" fill="none" opacity=".8"/>
<g stroke="#22a834" stroke-width="1" fill="none"><path d="M117.4 205.3 h3 m-1.5 -1.5 v3"/><path d="M143.7 229.4 h3 m-1.5 -1.5 v3"/><path d="M144.7 245.6 h3 m-1.5 -1.5 v3"/><path d="M130.7 251.4 h3 m-1.5 -1.5 v3"/><path d="M191.3 206.4 h3 m-1.5 -1.5 v3"/><path d="M209.8 244.4 h3 m-1.5 -1.5 v3"/><path d="M191.2 268.8 h3 m-1.5 -1.5 v3"/><path d="M212 212 h3"/></g>
<g stroke="#e85a20" stroke-width="1" fill="none"><path d="M129.6 243.2 h2.6 m-1.3 -1.3 v2.6"/><path d="M133.1 257.2 h3 m-1.5 -1.5 v3"/><path d="M130.8 276.5 h3"/><path d="M275 221.6 h3 m-1.5 -1.5 v3"/><path d="M275.6 266.4 h3.6"/></g>
</svg>
<div class="abs" style="left:113.8px;top:283.6px;width:87px;height:13.4px;background:#0c0c9c"></div>
<div class="t" style="left:120.2px;top:286.5px;font-size:9.1px;color:#fff">Profit FX 1.96 EA</div>
<div class="abs" style="left:111px;top:309.6px;width:913px;height:12.6px;background:#f0f0f0"></div>
<div class="abs" style="left:111px;top:321.4px;width:913px;height:1px;background:#8e8e8e"></div>
<div class="t" style="left:119.4px;top:312.9px;font-size:6.5px;color:#868686;transform:scaleX(.9);transform-origin:0 50%">EURUSD,M5</div>
<div class="abs" style="left:160.2px;top:312px;width:.6px;height:7px;background:#9a9a9a"></div>
<div class="t" style="left:167.2px;top:312.9px;font-size:6.5px;color:#868686;transform:scaleX(.9);transform-origin:0 50%">GBPUSD,M5</div>
<div class="abs" style="left:207.8px;top:312px;width:.6px;height:7px;background:#9a9a9a"></div>
<div class="t" style="left:214px;top:312.9px;font-size:6.5px;color:#868686;transform:scaleX(.9);transform-origin:0 50%">EURCHF,M5</div>
<div class="abs" style="left:255.3px;top:312px;width:.6px;height:7px;background:#9a9a9a"></div>
<div class="t" style="left:261.6px;top:312.9px;font-size:6.5px;color:#868686;transform:scaleX(.9);transform-origin:0 50%">EURUSD,M30</div>
<div class="abs" style="left:304.7px;top:312px;width:.6px;height:7px;background:#9a9a9a"></div>
<div class="t" style="left:311.6px;top:312.9px;font-size:6.5px;color:#868686;transform:scaleX(.9);transform-origin:0 50%">GBPUSD,M30</div>
<div class="abs" style="left:355.6px;top:312px;width:.6px;height:7px;background:#9a9a9a"></div>
<div class="t" style="left:361.6px;top:312.9px;font-size:6.5px;color:#868686;transform:scaleX(.9);transform-origin:0 50%">EURGBP,M30</div>
<div class="abs" style="left:406.2px;top:312px;width:.6px;height:7px;background:#9a9a9a"></div>
<div class="t" style="left:411.9px;top:312.9px;font-size:6.5px;color:#868686;transform:scaleX(.9);transform-origin:0 50%">AUDUSD,M30</div>
<div class="abs" style="left:458.4px;top:312px;width:.6px;height:7px;background:#9a9a9a"></div>
<div class="t" style="left:463.6px;top:312.9px;font-size:6.5px;color:#868686;transform:scaleX(.9);transform-origin:0 50%">NZDUSD,M30</div>
<div class="abs" style="left:509.5px;top:312px;width:.6px;height:7px;background:#9a9a9a"></div>
<div class="t" style="left:515px;top:312.9px;font-size:6.5px;color:#868686;transform:scaleX(.9);transform-origin:0 50%">USDCHF,M30</div>
<div class="abs" style="left:559.6px;top:309.2px;width:44.8px;height:12.6px;background:#fff;border:.7px solid #666;border-top:none;box-sizing:border-box"></div>
<div class="t" style="left:564.6px;top:312.9px;font-size:6.5px;color:#222;transform:scaleX(.9);transform-origin:0 50%">EURUSD,M1</div>
<div id="tbl" class="abs" style="left:0;top:322.4px;width:1024px;height:172px;background:#f0f0f0">
<div class="abs" style="left:0;top:0;width:1024px;height:2.2px;background:#f4f4f4"></div>
<div class="abs" style="left:0;top:2.2px;width:4.2px;height:170px;background:#e8e8e8"></div>
<div class="abs" style="left:0;top:9.4px;width:3.9px;height:163px;background:#c4d7ee"></div>
<div class="t" style="left:-1.8px;top:2.6px;font-size:6px;font-weight:bold;color:#111">×</div>
<div class="abs" style="left:4.4px;top:2.2px;width:1020px;height:170px;background:#fff"></div>
<div class="hd abs" style="left:0;top:2.2px;width:1024px;height:9.6px">
<span class="l" style="left:8.4px">Order</span><span class="l" style="left:31.2px;color:#8a8a8a;font-size:5px;top:3.2px">/</span>
<span style="right:819.6px">Time</span>
<span style="right:762.1px">Type</span>
<span style="right:716.1px">Size</span>
<span style="right:659.1px">Symbol</span>
<span style="right:601.4px">Price</span>
<span style="right:543.7px">S / L</span>
<span style="right:486.1px">T / P</span>
<span style="right:359.4px">Time</span>
<span style="right:302.4px">Price</span>
<span style="right:243.6px">Swap</span>
<span style="right:180.7px">Profit</span>
<span class="l" style="left:993.4px">Comment</span>
<div class="abs" style="left:79.6px;top:.6px;width:.6px;height:8.6px;background:#dedede"></div>
<div class="abs" style="left:207.5px;top:.6px;width:.6px;height:8.6px;background:#dedede"></div>
<div class="abs" style="left:265px;top:.6px;width:.6px;height:8.6px;background:#dedede"></div>
<div class="abs" style="left:311px;top:.6px;width:.6px;height:8.6px;background:#dedede"></div>
<div class="abs" style="left:368px;top:.6px;width:.6px;height:8.6px;background:#dedede"></div>
<div class="abs" style="left:425.7px;top:.6px;width:.6px;height:8.6px;background:#dedede"></div>
<div class="abs" style="left:483.4px;top:.6px;width:.6px;height:8.6px;background:#dedede"></div>
<div class="abs" style="left:541px;top:.6px;width:.6px;height:8.6px;background:#dedede"></div>
<div class="abs" style="left:667.7px;top:.6px;width:.6px;height:8.6px;background:#dedede"></div>
<div class="abs" style="left:724.7px;top:.6px;width:.6px;height:8.6px;background:#dedede"></div>
<div class="abs" style="left:783.5px;top:.6px;width:.6px;height:8.6px;background:#dedede"></div>
<div class="abs" style="left:846.4px;top:.6px;width:.6px;height:8.6px;background:#dedede"></div>
</div>
<div class="abs" style="left:4.4px;top:11.6px;width:1020px;height:.5px;background:#e2e2e2"></div>
<div class="row" style="top:11.90px;background:#fff">
<svg class="abs" style="left:6.1px;top:1.8px" width="9" height="9" viewBox="0 0 9 9"><path d="M.6 .5 H4.2 L6 2.3 V7.4 H.6 Z" fill="#fff" stroke="#6a6a6a" stroke-width=".55"/><path d="M4.2 .5 V2.3 H6" fill="none" stroke="#6a6a6a" stroke-width=".45"/><circle cx="6" cy="6.6" r="1.75" fill="#d9482b"/></svg>
<span class="l" style="left:16.8px">987166795</span>
<span style="right:818.5px">2025.02.03 17:43:00</span>
<span style="right:761.0px">sell</span>
<span style="right:715.0px">0.88</span>
<span style="right:658.0px">eurusd</span>
<span style="right:600.3px">1.03288</span>
<span style="right:542.6px">0.00000</span>
<span style="right:485.0px">1.03083</span>
<span style="right:358.3px">2025.02.03 17:46:40</span>
<span style="right:301.3px">1.03185</span>
<span style="right:242.5px">0.00</span>
<span style="right:179.6px">90.64</span>
</div>
<div class="row" style="top:22.73px;background:#e9e9e9">
<svg class="abs" style="left:6.1px;top:1.8px" width="9" height="9" viewBox="0 0 9 9"><path d="M.6 .5 H4.2 L6 2.3 V7.4 H.6 Z" fill="#fff" stroke="#6a6a6a" stroke-width=".55"/><path d="M4.2 .5 V2.3 H6" fill="none" stroke="#6a6a6a" stroke-width=".45"/><circle cx="6" cy="6.6" r="1.75" fill="#2d8fd6"/></svg>
<span class="l" style="left:16.8px">987167795</span>
<span style="right:818.5px">2025.02.03 17:44:00</span>
<span style="right:761.0px">buy</span>
<span style="right:715.0px">0.06</span>
<span style="right:658.0px">eurusd</span>
<span style="right:600.3px">1.03265</span>
<span style="right:542.6px">0.00000</span>
<span style="right:485.0px">1.03278</span>
<span style="right:358.3px">2025.02.03 17:50:05</span>
<span style="right:301.3px">1.03211</span>
<span style="right:242.5px">0.00</span>
<span style="right:179.6px">-3.24</span>
</div>
<div class="row" style="top:33.56px;background:#fff">
<svg class="abs" style="left:6.1px;top:1.8px" width="9" height="9" viewBox="0 0 9 9"><path d="M.6 .5 H4.2 L6 2.3 V7.4 H.6 Z" fill="#fff" stroke="#6a6a6a" stroke-width=".55"/><path d="M4.2 .5 V2.3 H6" fill="none" stroke="#6a6a6a" stroke-width=".45"/><circle cx="6" cy="6.6" r="1.75" fill="#2d8fd6"/></svg>
<span class="l" style="left:16.8px">987170445</span>
<span style="right:818.5px">2025.02.03 17:48:00</span>
<span style="right:761.0px">buy</span>
<span style="right:715.0px">0.10</span>
<span style="right:658.0px">eurusd</span>
<span style="right:600.3px">1.03126</span>
<span style="right:542.6px">0.00000</span>
<span style="right:485.0px">1.03278</span>
<span style="right:358.3px">2025.02.03 17:50:05</span>
<span style="right:301.3px">1.03211</span>
<span style="right:242.5px">0.00</span>
<span style="right:179.6px">8.50</span>
</div>
<div class="row" style="top:44.39px;background:#e9e9e9">
<svg class="abs" style="left:6.1px;top:1.8px" width="9" height="9" viewBox="0 0 9 9"><path d="M.6 .5 H4.2 L6 2.3 V7.4 H.6 Z" fill="#fff" stroke="#6a6a6a" stroke-width=".55"/><path d="M4.2 .5 V2.3 H6" fill="none" stroke="#6a6a6a" stroke-width=".45"/><circle cx="6" cy="6.6" r="1.75" fill="#d9482b"/></svg>
<span class="l" style="left:16.8px">987172110</span>
<span style="right:818.5px">2025.02.03 17:51:00</span>
<span style="right:761.0px">sell</span>
<span style="right:715.0px">0.22</span>
<span style="right:658.0px">eurusd</span>
<span style="right:600.3px">1.03217</span>
<span style="right:542.6px">0.00000</span>
<span style="right:485.0px">1.03058</span>
<span style="right:358.3px">2025.02.03 17:52:16</span>
<span style="right:301.3px">1.03152</span>
<span style="right:242.5px">0.00</span>
<span style="right:179.6px">14.30</span>
</div>
<div class="row" style="top:55.22px;background:#fff">
<svg class="abs" style="left:6.1px;top:1.8px" width="9" height="9" viewBox="0 0 9 9"><path d="M.6 .5 H4.2 L6 2.3 V7.4 H.6 Z" fill="#fff" stroke="#6a6a6a" stroke-width=".55"/><path d="M4.2 .5 V2.3 H6" fill="none" stroke="#6a6a6a" stroke-width=".45"/><circle cx="6" cy="6.6" r="1.75" fill="#2d8fd6"/></svg>
<span class="l" style="left:16.8px">987172702</span>
<span style="right:818.5px">2025.02.03 17:52:00</span>
<span style="right:761.0px">buy</span>
<span style="right:715.0px">0.06</span>
<span style="right:658.0px">eurusd</span>
<span style="right:600.3px">1.03189</span>
<span style="right:542.6px">0.00000</span>
<span style="right:485.0px">1.03227</span>
<span style="right:358.3px">2025.02.03 18:10:47</span>
<span style="right:301.3px">1.03136</span>
<span style="right:242.5px">0.00</span>
<span style="right:179.6px">-3.18</span>
</div>
<div class="row" style="top:66.05px;background:#e9e9e9">
<svg class="abs" style="left:6.1px;top:1.8px" width="9" height="9" viewBox="0 0 9 9"><path d="M.6 .5 H4.2 L6 2.3 V7.4 H.6 Z" fill="#fff" stroke="#6a6a6a" stroke-width=".55"/><path d="M4.2 .5 V2.3 H6" fill="none" stroke="#6a6a6a" stroke-width=".45"/><circle cx="6" cy="6.6" r="1.75" fill="#d9482b"/></svg>
<span class="l" style="left:16.8px">987173179</span>
<div class="abs" style="left:483.7px;top:0;width:57.3px;height:10.83px;background:#52e066"></div>
<span style="right:818.5px">2025.02.03 17:53:00</span>
<span style="right:761.0px">sell</span>
<span style="right:715.0px">0.06</span>
<span style="right:658.0px">eurusd</span>
<span style="right:600.3px">1.03238</span>
<span style="right:542.6px">0.00000</span>
<span style="right:485.0px">1.03138</span>
<span style="right:358.3px">2025.02.03 17:57:49</span>
<span style="right:301.3px">1.03138</span>
<span style="right:242.5px">0.00</span>
<span style="right:179.6px">6.00</span>
<span class="l" style="left:1012.6px">[tp]</span>
</div>
<div class="row" style="top:76.88px;background:#fff">
<svg class="abs" style="left:6.1px;top:1.8px" width="9" height="9" viewBox="0 0 9 9"><path d="M.6 .5 H4.2 L6 2.3 V7.4 H.6 Z" fill="#fff" stroke="#6a6a6a" stroke-width=".55"/><path d="M4.2 .5 V2.3 H6" fill="none" stroke="#6a6a6a" stroke-width=".45"/><circle cx="6" cy="6.6" r="1.75" fill="#d9482b"/></svg>
<span class="l" style="left:16.8px">987175667</span>
<div class="abs" style="left:483.7px;top:0;width:57.3px;height:10.83px;background:#52e066"></div>
<span style="right:818.5px">2025.02.03 17:59:00</span>
<span style="right:761.0px">sell</span>
<span style="right:715.0px">0.06</span>
<span style="right:658.0px">eurusd</span>
<span style="right:600.3px">1.03139</span>
<span style="right:542.6px">0.00000</span>
<span style="right:485.0px">1.03039</span>
<span style="right:358.3px">2025.02.03 18:03:08</span>
<span style="right:301.3px">1.03039</span>
<span style="right:242.5px">0.00</span>
<span style="right:179.6px">6.00</span>
<span class="l" style="left:1012.6px">[tp]</span>
</div>
<div class="row" style="top:87.71px;background:#e9e9e9">
<svg class="abs" style="left:6.1px;top:1.8px" width="9" height="9" viewBox="0 0 9 9"><path d="M.6 .5 H4.2 L6 2.3 V7.4 H.6 Z" fill="#fff" stroke="#6a6a6a" stroke-width=".55"/><path d="M4.2 .5 V2.3 H6" fill="none" stroke="#6a6a6a" stroke-width=".45"/><circle cx="6" cy="6.6" r="1.75" fill="#2d8fd6"/></svg>
<span class="l" style="left:16.8px">987179403</span>
<span style="right:818.5px">2025.02.03 18:04:00</span>
<span style="right:761.0px">buy</span>
<span style="right:715.0px">0.09</span>
<span style="right:658.0px">eurusd</span>
<span style="right:600.3px">1.03085</span>
<span style="right:542.6px">0.00000</span>
<span style="right:485.0px">1.03227</span>
<span style="right:358.3px">2025.02.03 18:10:47</span>
<span style="right:301.3px">1.03136</span>
<span style="right:242.5px">0.00</span>
<span style="right:179.6px">4.59</span>
</div>
<div class="row" style="top:98.54px;background:#fff">
<svg class="abs" style="left:6.1px;top:1.8px" width="9" height="9" viewBox="0 0 9 9"><path d="M.6 .5 H4.2 L6 2.3 V7.4 H.6 Z" fill="#fff" stroke="#6a6a6a" stroke-width=".55"/><path d="M4.2 .5 V2.3 H6" fill="none" stroke="#6a6a6a" stroke-width=".45"/><circle cx="6" cy="6.6" r="1.75" fill="#d9482b"/></svg>
<span class="l" style="left:16.8px">987179968</span>
<div class="abs" style="left:483.7px;top:0;width:57.3px;height:10.83px;background:#52e066"></div>
<span style="right:818.5px">2025.02.03 18:05:00</span>
<span style="right:761.0px">sell</span>
<span style="right:715.0px">0.06</span>
<span style="right:658.0px">eurusd</span>
<span style="right:600.3px">1.03121</span>
<span style="right:542.6px">0.00000</span>
<span style="right:485.0px">1.03021</span>
<span style="right:358.3px">2025.02.03 18:05:51</span>
<span style="right:301.3px">1.03021</span>
<span style="right:242.5px">0.00</span>
<span style="right:179.6px">6.00</span>
<span class="l" style="left:1012.6px">[tp]</span>
</div>
<div class="row" style="top:109.37px;background:#e9e9e9">
<svg class="abs" style="left:6.1px;top:1.8px" width="9" height="9" viewBox="0 0 9 9"><path d="M.6 .5 H4.2 L6 2.3 V7.4 H.6 Z" fill="#fff" stroke="#6a6a6a" stroke-width=".55"/><path d="M4.2 .5 V2.3 H6" fill="none" stroke="#6a6a6a" stroke-width=".45"/><circle cx="6" cy="6.6" r="1.75" fill="#d9482b"/></svg>
<span class="l" style="left:16.8px">987181998</span>
<span style="right:818.5px">2025.02.03 18:07:00</span>
<span style="right:761.0px">sell</span>
<span style="right:715.0px">0.06</span>
<span style="right:658.0px">eurusd</span>
<span style="right:600.3px">1.03070</span>
<span style="right:542.6px">0.00000</span>
<span style="right:485.0px">1.03032</span>
<span style="right:358.3px">2025.02.03 18:21:07</span>
<span style="right:301.3px">1.03118</span>
<span style="right:242.5px">0.00</span>
<span style="right:179.6px">-2.88</span>
</div>
<div class="row" style="top:120.20px;background:#fff">
<svg class="abs" style="left:6.1px;top:1.8px" width="9" height="9" viewBox="0 0 9 9"><path d="M.6 .5 H4.2 L6 2.3 V7.4 H.6 Z" fill="#fff" stroke="#6a6a6a" stroke-width=".55"/><path d="M4.2 .5 V2.3 H6" fill="none" stroke="#6a6a6a" stroke-width=".45"/><circle cx="6" cy="6.6" r="1.75" fill="#2d8fd6"/></svg>
<span class="l" style="left:16.8px">987184252</span>
<div class="abs" style="left:483.7px;top:0;width:57.3px;height:10.83px;background:#52e066"></div>
<span style="right:818.5px">2025.02.03 18:12:00</span>
<span style="right:761.0px">buy</span>
<span style="right:715.0px">0.06</span>
<span style="right:658.0px">eurusd</span>
<span style="right:600.3px">1.03100</span>
<span style="right:542.6px">0.00000</span>
<span style="right:485.0px">1.03200</span>
<span style="right:358.3px">2025.02.03 18:15:16</span>
<span style="right:301.3px">1.03200</span>
<span style="right:242.5px">0.00</span>
<span style="right:179.6px">6.00</span>
<span class="l" style="left:1012.6px">[tp]</span>
</div>
<div class="row" style="top:131.03px;background:#e9e9e9">
<svg class="abs" style="left:6.1px;top:1.8px" width="9" height="9" viewBox="0 0 9 9"><path d="M.6 .5 H4.2 L6 2.3 V7.4 H.6 Z" fill="#fff" stroke="#6a6a6a" stroke-width=".55"/><path d="M4.2 .5 V2.3 H6" fill="none" stroke="#6a6a6a" stroke-width=".45"/><circle cx="6" cy="6.6" r="1.75" fill="#d9482b"/></svg>
<span class="l" style="left:16.8px">987185041</span>
<span style="right:818.5px">2025.02.03 18:14:00</span>
<span style="right:761.0px">sell</span>
<span style="right:715.0px">0.09</span>
<span style="right:658.0px">eurusd</span>
<span style="right:600.3px">1.03173</span>
<span style="right:542.6px">0.00000</span>
<span style="right:485.0px">1.03032</span>
<span style="right:358.3px">2025.02.03 18:21:07</span>
<span style="right:301.3px">1.03118</span>
<span style="right:242.5px">0.00</span>
<span style="right:179.6px">4.95</span>
</div>
<div class="row" style="top:141.86px;background:#fff">
<svg class="abs" style="left:6.1px;top:1.8px" width="9" height="9" viewBox="0 0 9 9"><path d="M.6 .5 H4.2 L6 2.3 V7.4 H.6 Z" fill="#fff" stroke="#6a6a6a" stroke-width=".55"/><path d="M4.2 .5 V2.3 H6" fill="none" stroke="#6a6a6a" stroke-width=".45"/><circle cx="6" cy="6.6" r="1.75" fill="#2d8fd6"/></svg>
<span class="l" style="left:16.8px">987186896</span>
<span style="right:818.5px">2025.02.03 18:19:01</span>
<span style="right:761.0px">buy</span>
<span style="right:715.0px">0.06</span>
<span style="right:658.0px">eurusd</span>
<span style="right:600.3px">1.03184</span>
<span style="right:542.6px">0.00000</span>
<span style="right:485.0px">1.03203</span>
<span style="right:358.3px">2025.02.03 18:35:19</span>
<span style="right:301.3px">1.03112</span>
<span style="right:242.5px">0.00</span>
<span style="right:179.6px">-4.32</span>
</div>
<div class="row" style="top:152.69px;background:#e9e9e9">
<svg class="abs" style="left:6.1px;top:1.8px" width="9" height="9" viewBox="0 0 9 9"><path d="M.6 .5 H4.2 L6 2.3 V7.4 H.6 Z" fill="#fff" stroke="#6a6a6a" stroke-width=".55"/><path d="M4.2 .5 V2.3 H6" fill="none" stroke="#6a6a6a" stroke-width=".45"/><circle cx="6" cy="6.6" r="1.75" fill="#d9482b"/></svg>
<span class="l" style="left:16.8px">987188316</span>
<div class="abs" style="left:483.7px;top:0;width:57.3px;height:10.83px;background:#52e066"></div>
<span style="right:818.5px">2025.02.03 18:23:00</span>
<span style="right:761.0px">sell</span>
<span style="right:715.0px">0.06</span>
<span style="right:658.0px">eurusd</span>
<span style="right:600.3px">1.03123</span>
<span style="right:542.6px">0.00000</span>
<span style="right:485.0px">1.03023</span>
<span style="right:358.3px">2025.02.03 18:29:25</span>
<span style="right:301.3px">1.03023</span>
<span style="right:242.5px">0.00</span>
<span style="right:179.6px">6.00</span>
<span class="l" style="left:1012.6px">[tp]</span>
</div>
<div class="row" style="top:163.52px;background:#fff">
<svg class="abs" style="left:6.1px;top:1.8px" width="9" height="9" viewBox="0 0 9 9"><path d="M.6 .5 H4.2 L6 2.3 V7.4 H.6 Z" fill="#fff" stroke="#6a6a6a" stroke-width=".55"/><path d="M4.2 .5 V2.3 H6" fill="none" stroke="#6a6a6a" stroke-width=".45"/><circle cx="6" cy="6.6" r="1.75" fill="#2d8fd6"/></svg>
<span class="l" style="left:16.8px">987189752</span>
<div class="abs" style="left:483.7px;top:0;width:57.3px;height:10.83px;background:#52e066"></div>
<span style="right:818.5px">2025.02.03 18:26:00</span>
<span style="right:761.0px">buy</span>
<span style="right:715.0px">0.06</span>
<span style="right:658.0px">eurusd</span>
<span style="right:600.3px">1.03087</span>
<span style="right:542.6px">0.00000</span>
<span style="right:485.0px">1.03187</span>
<span style="right:358.3px">2025.02.03 18:41:12</span>
<span style="right:301.3px">1.03187</span>
<span style="right:242.5px">0.00</span>
<span style="right:179.6px">6.00</span>
<span class="l" style="left:1012.6px">[tp]</span>
</div>
<div class="abs" style="left:79.6px;top:12px;width:.5px;height:160px;background:rgba(210,210,210,.35)"></div>
<div class="abs" style="left:207.5px;top:12px;width:.5px;height:160px;background:rgba(210,210,210,.35)"></div>
<div class="abs" style="left:265px;top:12px;width:.5px;height:160px;background:rgba(210,210,210,.35)"></div>
<div class="abs" style="left:311px;top:12px;width:.5px;height:160px;background:rgba(210,210,210,.35)"></div>
<div class="abs" style="left:368px;top:12px;width:.5px;height:160px;background:rgba(210,210,210,.35)"></div>
<div class="abs" style="left:425.7px;top:12px;width:.5px;height:160px;background:rgba(210,210,210,.35)"></div>
<div class="abs" style="left:483.4px;top:12px;width:.5px;height:160px;background:rgba(210,210,210,.35)"></div>
<div class="abs" style="left:541px;top:12px;width:.5px;height:160px;background:rgba(210,210,210,.35)"></div>
<div class="abs" style="left:667.7px;top:12px;width:.5px;height:160px;background:rgba(210,210,210,.35)"></div>
<div class="abs" style="left:724.7px;top:12px;width:.5px;height:160px;background:rgba(210,210,210,.35)"></div>
<div class="abs" style="left:783.5px;top:12px;width:.5px;height:160px;background:rgba(210,210,210,.35)"></div>
<div class="abs" style="left:846.4px;top:12px;width:.5px;height:160px;background:rgba(210,210,210,.35)"></div>
<div class="abs" style="left:0;top:2.2px;width:4.2px;height:170px;background:#e8e8e8"></div>
<div class="abs" style="left:0;top:9.4px;width:3.9px;height:156.8px;background:#c4d7ee"></div>
<div class="t" style="left:-1.8px;top:2.6px;font-size:6px;font-weight:bold;color:#111">×</div>
</div>
<div class="t" style="left:858.6px;top:452.6px;font-size:10.6px;color:rgba(120,120,120,.46)">Activate Windows</div>
<div class="t" style="left:858.6px;top:466.6px;font-size:7.9px;color:rgba(120,120,120,.42)">Go to Settings to activate Windows.</div>
<div class="t" style="left:810.2px;top:473.8px;font-size:10.6px;color:rgba(120,120,120,.42)">Activate Windows</div>
<div class="t" style="left:810.2px;top:487.6px;font-size:7.9px;color:rgba(120,120,120,.25)">Go to Settings to activate Windows.</div>
<div class="abs" style="left:0;top:489px;width:1024px;height:5px;background:#eaeaea"></div>
<div class="abs" style="left:0;top:492.3px;width:992px;height:1px;background:#b4b4b4"></div>
<div class="abs" style="left:992px;top:492.3px;width:32px;height:1px;background:#d4d4d4"></div>
<div class="abs" style="left:1019.3px;top:0;width:4.7px;height:494px;background:#efefef"></div>
<div class="abs" style="left:1021.1px;top:0;width:.8px;height:494px;background:#fbfbfb"></div>
<div class="abs" style="left:1019.2px;top:322px;width:.5px;height:172px;background:#c8c8c8"></div>
<div class="abs" style="left:1021.8px;top:398px;width:1px;height:31px;background:#bdbdbd"></div>
</div></body></html>
